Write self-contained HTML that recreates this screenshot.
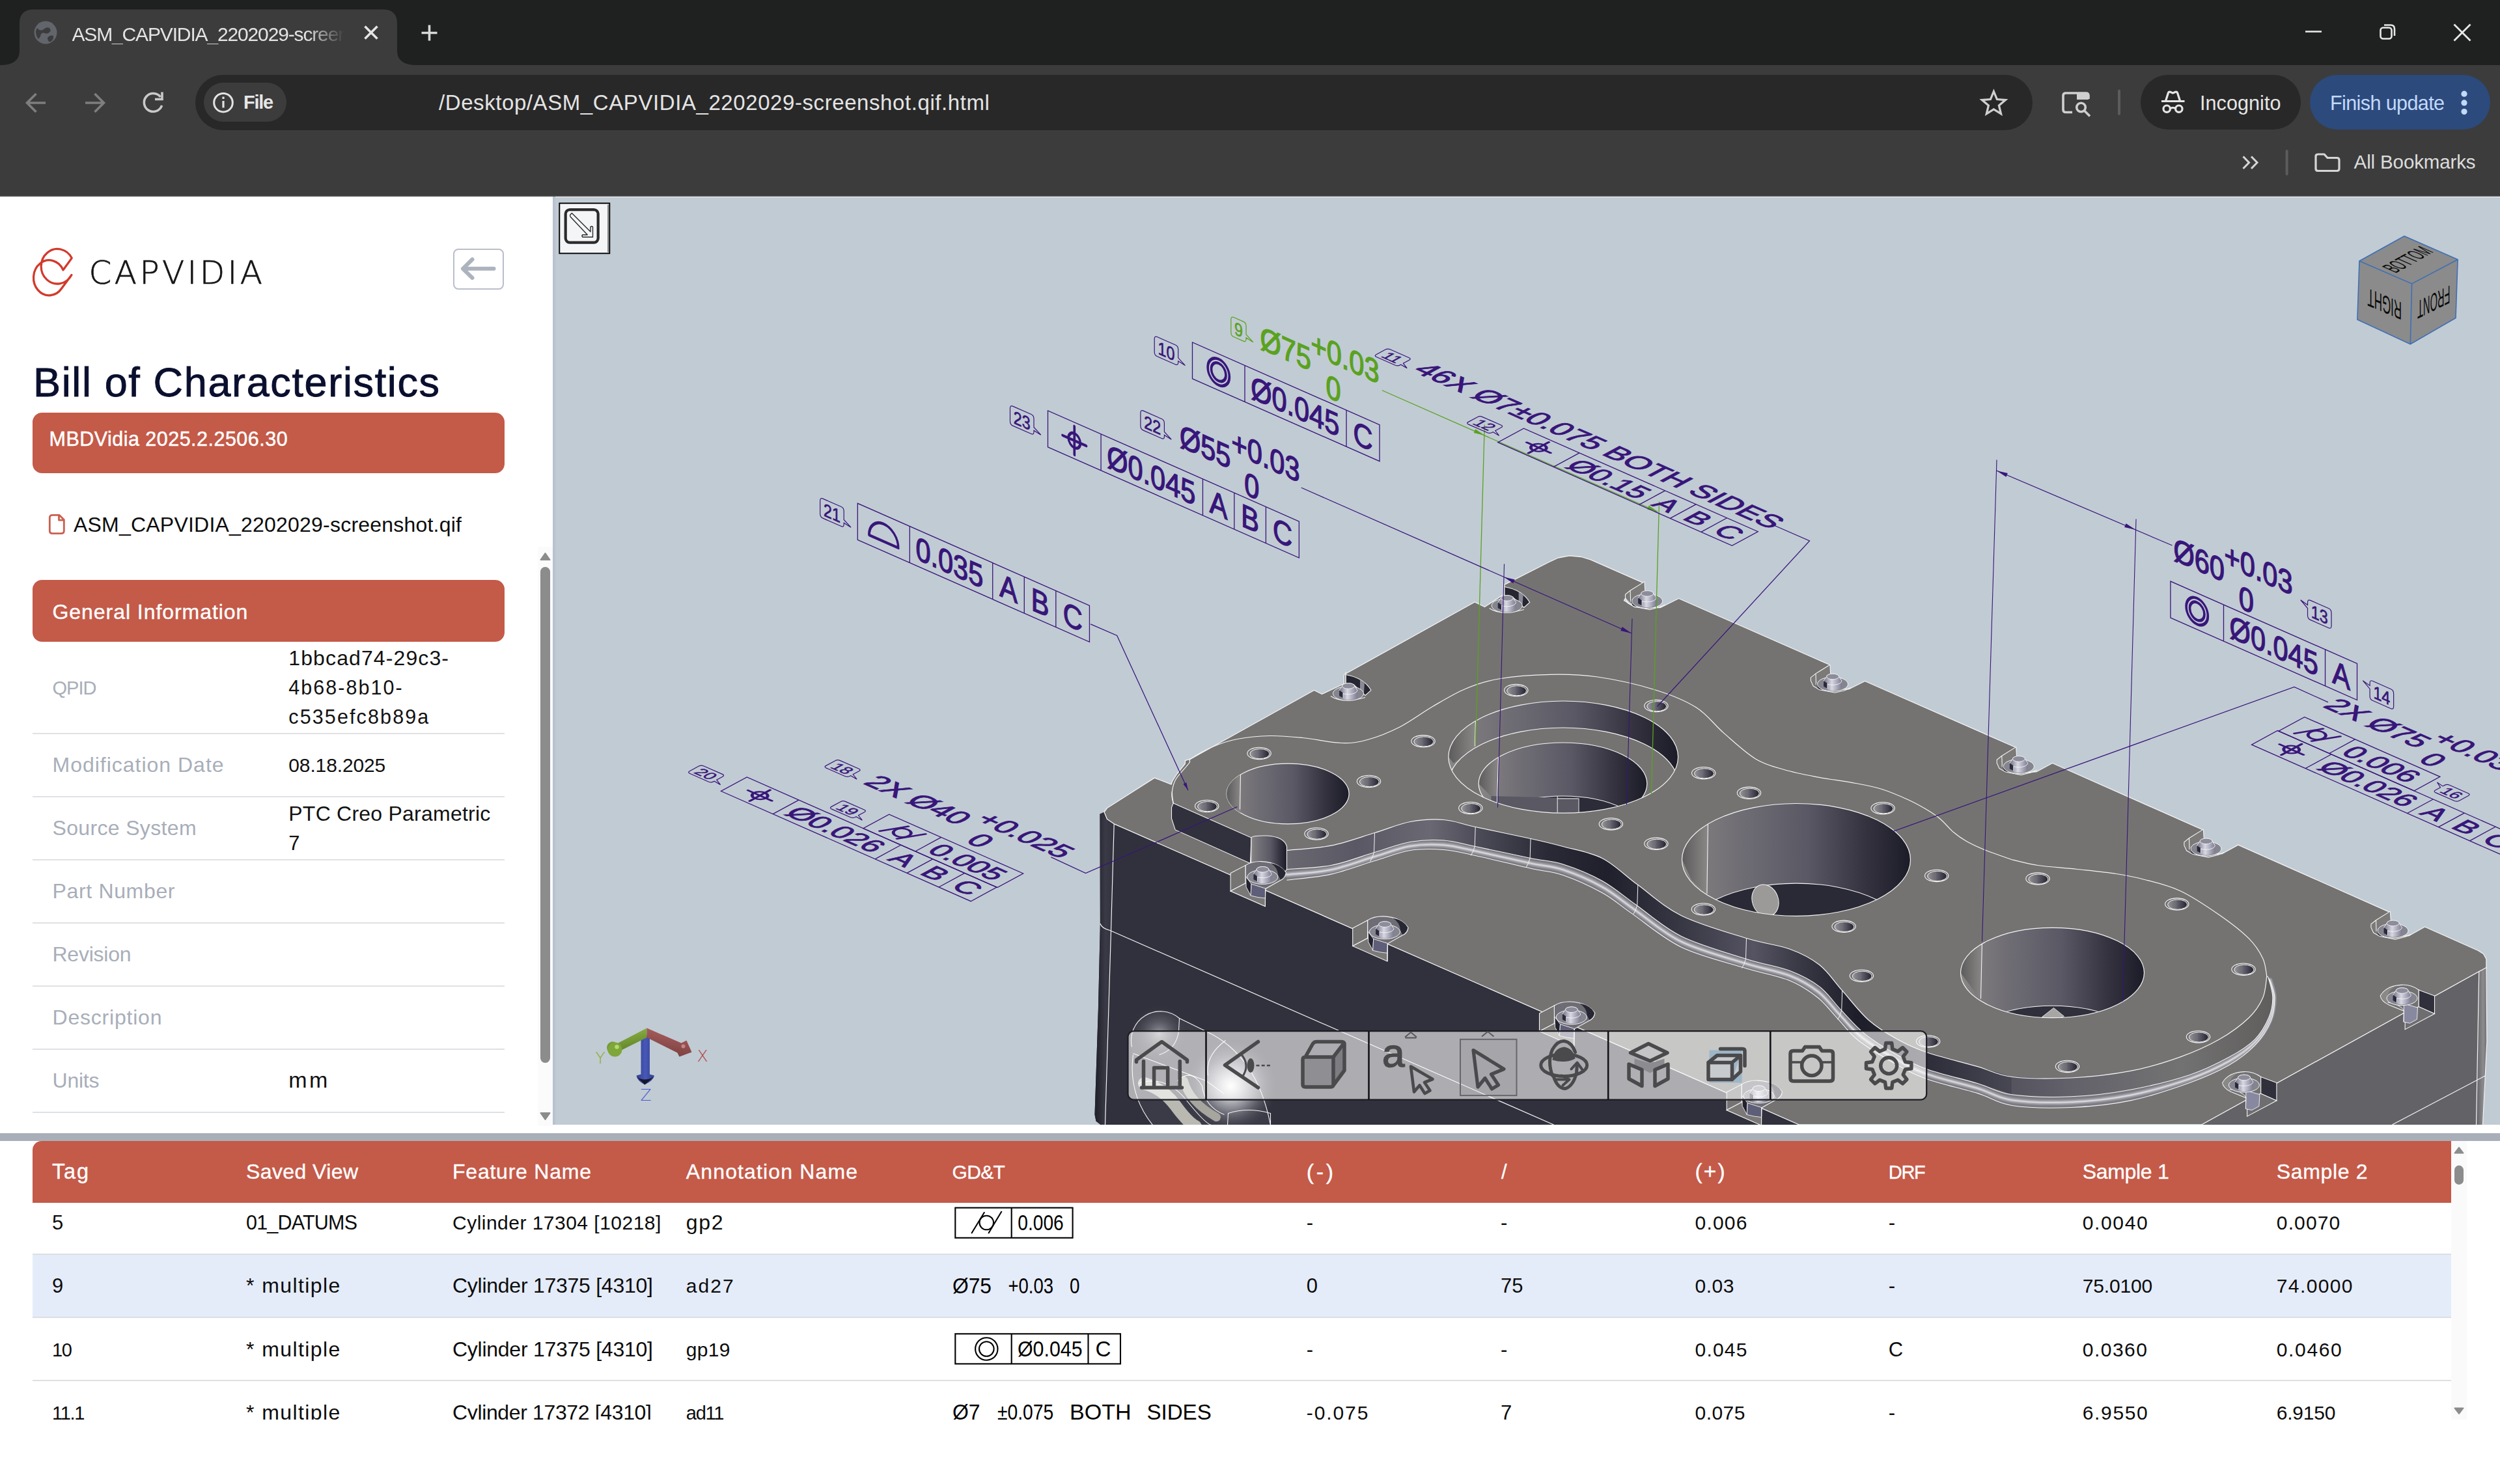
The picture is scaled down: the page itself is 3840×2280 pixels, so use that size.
<!DOCTYPE html>
<html lang="en"><head><meta charset="utf-8"><title>ASM_CAPVIDIA_2202029-screenshot.qif</title>
<style>
html,body{margin:0;padding:0}
body{width:3840px;height:2280px;position:relative;overflow:hidden;background:#fff;font-family:"Liberation Sans",sans-serif}
.t{position:absolute;white-space:nowrap;line-height:1;}
.abs{position:absolute;display:block}
#left{position:absolute;left:0;top:0;width:0;height:0}

#chrome{position:absolute;left:0;top:0;width:3840px;height:302px;background:#3c3c3c}
#tabstrip{position:absolute;left:0;top:0;width:3840px;height:100px;background:#1f2020}
#toolbar{position:absolute;left:0;top:100px;width:3840px;height:200px;background:#3c3c3c;border-bottom:2px solid #4a4a4a;box-sizing:content-box}
#urlbar{position:absolute;left:300px;top:115px;width:2822px;height:84.7px;border-radius:43px;background:#282828}
#filechip{position:absolute;left:313px;top:127.4px;width:127px;height:59.8px;border-radius:30px;background:#3c3c3c}
.pill{position:absolute;top:114.8px;height:84.7px;border-radius:43px}


#left .t, #left .abs, #left div{ }
#backbtn{position:absolute;left:695.6px;top:381.8px;width:78.4px;height:63.6px;border:2.2px solid #b9bec9;border-radius:8px;box-sizing:border-box;background:#fff}
.redbox{position:absolute;left:49.8px;width:725.2px;border-radius:14.5px;background:#c45a48}
.rowline{position:absolute;left:50px;width:725px;height:2.4px;background:#dfe1e5}
#vdiv{position:absolute;left:849px;top:302px;width:3.5px;height:1426px;background:#b9c2ce}

#hdiv{position:absolute;left:0;top:1740.5px;width:3840px;height:12.5px;background:#a9afb9}
#tbl{position:absolute;left:0;top:0;width:0;height:0}
#thead{position:absolute;left:50px;top:1753px;width:3715px;height:94.5px;background:#c45a48;border-radius:14px 0 0 0}
.trow{position:absolute;left:50px;width:3715px;background:#fff}
.trow.hl{background:#e5ecf9}
.tline{position:absolute;left:50px;width:3715px;height:2px;background:#dcdfe4}
#tclip{position:absolute;left:0;top:1848px;width:3765px;height:333px;overflow:hidden}
#tclip .t{margin-top:-1848px}
</style></head>
<body>
<div id="chrome">
<div id="tabstrip"></div>
<svg class="abs" style="left:0;top:0" width="700" height="101" viewBox="0 0 700 101">
<path d="M0 100 Q30 100 30 78 L30 36 Q30 14.5 52 14.5 L588 14.5 Q610 14.5 610 36 L610 78 Q610 100 640 100 L640 101 L0 101 Z" fill="#3c3c3c"/>
<circle cx="70" cy="50" r="17.5" fill="#62656b"/>
<path d="M57 43 q5 6 10 2 q4 -4 9 -2 l2 4 q-4 6 -9 4 q-6 -2 -7 5 l-3 4 q-4 -5 -4 -12z M73 58 q4 -5 9 -3 q1 5 -4 9 q-5 1 -5 -6z" fill="#3c3c3c"/>
<path d="M560.5 40.5 L579.5 59.5 M579.5 40.5 L560.5 59.5" stroke="#e6e6e6" stroke-width="3.6" fill="none"/>
<path d="M647.5 50.5 H671.5 M659.5 38.5 V62.5" stroke="#d8d8d8" stroke-width="3.6" fill="none"/>
</svg>
<span class="t" style="left:110.5px;top:37.6px;font-size:30px;color:#e4e4e4;width:418px;overflow:hidden;white-space:nowrap;-webkit-mask-image:linear-gradient(90deg,#000 86%,transparent 100%);mask-image:linear-gradient(90deg,#000 86%,transparent 100%);letter-spacing:-1.15px;">ASM_CAPVIDIA_2202029-screen</span>
<svg class="abs" style="left:3500px;top:0" width="340" height="100" viewBox="3500 0 340 100">
<path d="M3541 48.5 H3566" stroke="#e8e8e8" stroke-width="2.6"/>
<rect x="3656.5" y="42.5" width="17" height="17" rx="4" fill="none" stroke="#e8e8e8" stroke-width="2.6"/>
<path d="M3662 38.5 H3672 Q3678 38.5 3678 44.5 V55" fill="none" stroke="#e8e8e8" stroke-width="2.6"/>
<path d="M3769.5 37.5 L3794.5 62.5 M3794.5 37.5 L3769.5 62.5" stroke="#e8e8e8" stroke-width="2.8"/>
</svg>
<div id="toolbar"></div>
<div id="urlbar"></div><div id="filechip"></div>
<div class="pill" style="left:3287.5px;width:246.5px;background:#282828"></div>
<div class="pill" style="left:3547.5px;width:277px;background:#2c4a7c"></div>
<svg class="abs" style="left:0;top:100px" width="3840" height="200" viewBox="0 100 3840 200">
<g fill="none" stroke="#7e7e7e" stroke-width="3.6" stroke-linejoin="miter">
<path d="M70 158 H42 M55.5 144 L41.5 158 L55.5 172"/>
<path d="M131 158 H159 M145.5 144 L159.5 158 L145.5 172"/>
</g>
<g fill="none" stroke="#c9c9c9" stroke-width="3.6">
<path d="M246.5 149 A14 14 0 1 0 248.6 162"/>
<path d="M249 141.5 V152.5 H238" />
</g>
<circle cx="343" cy="157.7" r="14.3" fill="none" stroke="#e2e2e2" stroke-width="3"/>
<rect x="341.4" y="155" width="3.2" height="10.5" fill="#e2e2e2"/><rect x="341.4" y="148.6" width="3.2" height="3.4" fill="#e2e2e2"/>
<path d="M3062.4 140.5 L3067.4 152.6 L3080.4 153.6 L3070.4 162 L3073.5 174.8 L3062.4 167.9 L3051.3 174.8 L3054.4 162 L3044.4 153.6 L3057.4 152.6 Z" fill="none" stroke="#d0d0d0" stroke-width="3.2" stroke-linejoin="miter"/>
<g fill="none" stroke="#cfcfcf" stroke-width="3.6">
<path d="M3183 172.5 H3173 Q3169 172.5 3169 168.5 V147 Q3169 143 3173 143 H3204 Q3208 143 3208 147 V152"/>
<circle cx="3196.5" cy="165" r="6.8"/>
<path d="M3201.5 170 L3210 178.5"/>
</g>
<path d="M3190 143 H3204 Q3208 143 3208 147 V153 H3190 Z" fill="#cfcfcf"/>
<rect x="3253" y="137.5" width="4" height="39.5" rx="2" fill="#5c5c5c"/>
<g fill="none" stroke="#e6e6e6" stroke-width="3.2" stroke-linejoin="round">
<path d="M3320 155.5 H3355.5"/>
<path d="M3326.5 155 L3330.5 142.5 Q3331.5 140.5 3333.5 141.3 L3337.5 143 L3341.5 141.3 Q3343.5 140.5 3344.5 142.5 L3348.5 155"/>
<circle cx="3328.2" cy="167.2" r="5.2"/><circle cx="3346.8" cy="167.2" r="5.2"/>
<path d="M3333.4 166.5 Q3337.5 164.5 3341.6 166.5"/>
</g>
<circle cx="3785" cy="144.2" r="4.6" fill="#c3d9fb"/><circle cx="3785" cy="157.9" r="4.6" fill="#c3d9fb"/><circle cx="3785" cy="171.6" r="4.6" fill="#c3d9fb"/>
<path d="M3445.5 240.5 L3454.5 249.8 L3445.5 259 M3458 240.5 L3467 249.8 L3458 259" fill="none" stroke="#d6d6d6" stroke-width="3"/>
<rect x="3510.6" y="230" width="4" height="39.5" rx="2" fill="#5c5c5c"/>
<path d="M3557 240.5 Q3557 237 3560.5 237 H3570 L3575 242.5 H3589.5 Q3593 242.5 3593 246 V259 Q3593 262.5 3589.5 262.5 H3560.5 Q3557 262.5 3557 259 Z" fill="none" stroke="#d6d6d6" stroke-width="3.2" stroke-linejoin="round"/>
</svg>
<span class="t" style="left:374.0px;top:143.1px;font-size:29px;letter-spacing:-1.30px;font-weight:700;color:#e6e6e6;">File</span>
<span class="t" style="left:674.0px;top:141.1px;font-size:33px;letter-spacing:0.58px;color:#e4e4e4;">/Desktop/ASM_CAPVIDIA_2202029-screenshot.qif.html</span>
<span class="t" style="left:3379.0px;top:143.2px;font-size:30.5px;letter-spacing:0.09px;color:#e6e6e6;">Incognito</span>
<span class="t" style="left:3579.0px;top:143.2px;font-size:30.5px;letter-spacing:-0.59px;color:#c3d9fb;">Finish update</span>
<span class="t" style="left:3615.6px;top:234.0px;font-size:29.5px;letter-spacing:-0.13px;color:#dcdcdc;">All Bookmarks</span>
</div>
<div id="left">
<svg class="abs" style="left:40px;top:370px" width="90" height="100" viewBox="40 370 90 100">
<g fill="none" stroke="#d23a2c" stroke-width="3.3" stroke-linecap="round" stroke-linejoin="round">
<path d="M109.9 422.4 A25 26.75 0 1 1 110.2 396.6 L97 414.8 A24 27 0 1 0 94.7 443 Z"/></g></svg>
<span class="t" style="left:136.5px;top:393.9px;font-size:50px;letter-spacing:4.40px;font-family:'DejaVu Sans Light', 'DejaVu Sans', sans-serif;color:#161616;-webkit-text-stroke:0.7px #161616;">CAPVIDIA</span>
<div id="backbtn"></div>
<svg class="abs" style="left:695px;top:381px" width="80" height="65" viewBox="695 381 80 65">
<path d="M758.5 412.8 H711 M725.5 398.5 L711 412.8 L725.5 427" fill="none" stroke="#adb3be" stroke-width="6" stroke-linecap="round" stroke-linejoin="round"/></svg>
<span class="t" style="left:51.0px;top:556.3px;font-size:63px;letter-spacing:1.63px;color:#0a0f2e;-webkit-text-stroke:0.9px #0a0f2e;">Bill of Characteristics</span>
<div class="redbox" style="top:634.2px;height:93px"></div>
<span class="t" style="left:75.5px;top:659.0px;font-size:30.5px;letter-spacing:0.48px;color:#fff;-webkit-text-stroke:0.5px #fff;">MBDVidia 2025.2.2506.30</span>
<svg class="abs" style="left:70px;top:785px" width="36" height="40" viewBox="70 785 36 40">
<path d="M76.3 795.5 Q76.3 791.3 80.5 791.3 H91 L98.3 798.6 V815.5 Q98.3 819.6 94 819.6 H80.5 Q76.3 819.6 76.3 815.5 Z M90.5 791.8 V799.2 H97.8" fill="none" stroke="#c9604f" stroke-width="2.8" stroke-linejoin="round"/></svg>
<span class="t" style="left:113.0px;top:789.9px;font-size:32px;letter-spacing:0.21px;color:#0c0c0c;">ASM_CAPVIDIA_2202029-screenshot.qif</span>
<div class="redbox" style="top:891px;height:94.6px"></div>
<span class="t" style="left:80.5px;top:923.9px;font-size:32px;letter-spacing:0.95px;color:#fff;-webkit-text-stroke:0.4px #fff;">General Information</span>
<div class="rowline" style="top:1125.7px"></div>
<div class="rowline" style="top:1222.8px"></div>
<div class="rowline" style="top:1319.8px"></div>
<div class="rowline" style="top:1416.8px"></div>
<div class="rowline" style="top:1513.8px"></div>
<div class="rowline" style="top:1610.8px"></div>
<div class="rowline" style="top:1707.8px"></div>
<span class="t" style="left:80.5px;top:1042.5px;font-size:29.0px;letter-spacing:-0.97px;color:#a8aeb9;">QPID</span>
<span class="t" style="left:443.3px;top:995.2px;font-size:32px;letter-spacing:1.11px;color:#111;">1bbcad74-29c3-</span>
<span class="t" style="left:443.3px;top:1041.2px;font-size:30.5px;letter-spacing:2.03px;color:#111;">4b68-8b10-</span>
<span class="t" style="left:443.3px;top:1086.2px;font-size:30.5px;letter-spacing:2.12px;color:#111;">c535efc8b89a</span>
<span class="t" style="left:80.5px;top:1158.9px;font-size:32px;letter-spacing:0.99px;color:#a8aeb9;">Modification Date</span>
<span class="t" style="left:443.3px;top:1160.6px;font-size:30px;letter-spacing:-0.13px;color:#111;">08.18.2025</span>
<span class="t" style="left:80.5px;top:1255.9px;font-size:32px;letter-spacing:0.34px;color:#a8aeb9;">Source System</span>
<span class="t" style="left:443.3px;top:1233.9px;font-size:32px;letter-spacing:0.23px;color:#111;">PTC Creo Parametric</span>
<span class="t" style="left:443.3px;top:1279.8px;font-size:31px;color:#111;">7</span>
<span class="t" style="left:80.5px;top:1352.9px;font-size:32px;letter-spacing:0.66px;color:#a8aeb9;">Part Number</span>
<span class="t" style="left:80.5px;top:1449.9px;font-size:32px;letter-spacing:-0.25px;color:#a8aeb9;">Revision</span>
<span class="t" style="left:80.5px;top:1546.9px;font-size:32px;letter-spacing:0.79px;color:#a8aeb9;">Description</span>
<span class="t" style="left:80.5px;top:1643.9px;font-size:32px;letter-spacing:-0.23px;color:#a8aeb9;">Units</span>
<span class="t" style="left:443.3px;top:1642.2px;font-size:34.0px;letter-spacing:3.35px;color:#111;">mm</span>
<svg class="abs" style="left:826px;top:840px" width="24" height="890" viewBox="826 840 24 890">
<rect x="826" y="840" width="24" height="890" fill="#fbfbfb"/>
<path d="M830.5 860 L837.5 850 L844.5 860 Z" fill="#8c8c8c" stroke="#8c8c8c" stroke-width="2" stroke-linejoin="round"/>
<rect x="830" y="871" width="15" height="762" rx="7.5" fill="#8c8c8c"/>
<path d="M830.5 1710 L837.5 1720 L844.5 1710 Z" fill="#8c8c8c" stroke="#8c8c8c" stroke-width="2" stroke-linejoin="round"/>
</svg>
</div>
<div id="vdiv"></div>
<svg id="viewer" class="abs" style="left:852.5px;top:302.5px" width="2987.5" height="1425" viewBox="852.5 302.5 2987.5 1425">
<defs>
<linearGradient id="gHole" x1="0" x2="1" y1="0" y2="0">
<stop offset="0" stop-color="#8a8886"/><stop offset="0.10" stop-color="#7c7a7c"/><stop offset="0.3" stop-color="#6c6a72"/>
<stop offset="0.55" stop-color="#5a5864"/><stop offset="0.8" stop-color="#34333f"/><stop offset="1" stop-color="#1c1c28"/></linearGradient>
<linearGradient id="gHoleL" x1="0" x2="1" y1="0" y2="0">
<stop offset="0" stop-color="#5c5b5b"/><stop offset="1" stop-color="#8a8887"/></linearGradient>
<linearGradient id="gSmall" x1="0" x2="1" y1="0" y2="0">
<stop offset="0" stop-color="#9a98a0"/><stop offset="0.45" stop-color="#66647080"/><stop offset="0.45" stop-color="#666470"/><stop offset="1" stop-color="#22222e"/></linearGradient>
<linearGradient id="gWall" gradientUnits="userSpaceOnUse" x1="1970" x2="3100" y1="0" y2="0">
<stop offset="0" stop-color="#6a6870"/><stop offset="0.10" stop-color="#5a5864"/><stop offset="0.2" stop-color="#6a6872"/><stop offset="0.27" stop-color="#4a4956"/>
<stop offset="0.36" stop-color="#2a2a36"/><stop offset="0.44" stop-color="#20202c"/><stop offset="0.55" stop-color="#3a3946"/><stop offset="0.64" stop-color="#565462"/><stop offset="0.70" stop-color="#3a3946"/>
<stop offset="0.78" stop-color="#1e1e2a"/><stop offset="0.86" stop-color="#2a2a36"/><stop offset="1" stop-color="#4a4956"/></linearGradient>
<linearGradient id="gWall2" gradientUnits="userSpaceOnUse" x1="3000" x2="3500" y1="0" y2="0">
<stop offset="0" stop-color="#464552"/><stop offset="0.35" stop-color="#62616a"/><stop offset="0.7" stop-color="#737272"/><stop offset="1" stop-color="#5e5d5c"/></linearGradient>
<linearGradient id="gEdgeL" gradientUnits="userSpaceOnUse" x1="1684" x2="1710" y1="0" y2="0">
<stop offset="0" stop-color="#23232d"/><stop offset="0.5" stop-color="#3a3a46"/><stop offset="1" stop-color="#32323e"/></linearGradient>
<linearGradient id="gEdgeR" gradientUnits="userSpaceOnUse" x1="3804" x2="3820" y1="0" y2="0">
<stop offset="0" stop-color="#666569"/><stop offset="0.6" stop-color="#8c8b8e"/><stop offset="1" stop-color="#6e6d70"/></linearGradient>
<linearGradient id="gBolt" x1="0" x2="1" y1="0" y2="0">
<stop offset="0" stop-color="#6e6e82"/><stop offset="0.45" stop-color="#d8d8e4"/><stop offset="1" stop-color="#7c7c92"/></linearGradient>
<linearGradient id="gNut" x1="0" x2="1" y1="0" y2="0">
<stop offset="0" stop-color="#4a4a5c"/><stop offset="0.4" stop-color="#9a9ab0"/><stop offset="1" stop-color="#8686a0"/></linearGradient>
<radialGradient id="gBoss" cx="0.5" cy="0.5" r="0.5">
<stop offset="0" stop-color="#ffffff"/><stop offset="0.25" stop-color="#c8c8cc"/><stop offset="0.7" stop-color="#6a6a76"/><stop offset="1" stop-color="#34343f"/></radialGradient>
<linearGradient id="gFillet" x1="0" x2="0" y1="0" y2="1">
<stop offset="0" stop-color="#55545e"/><stop offset="0.5" stop-color="#c4c4c8"/><stop offset="1" stop-color="#8a8988"/></linearGradient>
</defs>
<rect x="852" y="302" width="2990" height="1427" fill="#c1cbd4"/>
<g id="model">
<path d="M1689.0 1250.0 L1695.5 1247.0 L1700.0 1258.0 L1710.7 1265.3 L2763.0 1727.5 L1690.0 1727.5 L1683.0 1722.0 L1681.0 1712.0 L1686.4 1550.0 L1689.4 1418.5 Z" fill="#31313d"/>
<path d="M1689 1250 L1710.7 1265.3 L1706 1430 L1697 1727.5 L1690 1727.5 L1683 1722 L1681 1712 L1686.4 1550 L1689.4 1418.5 Z" fill="url(#gEdgeL)"/>
<defs><radialGradient id="gB1" cx="0.5" cy="0.5" r="0.5"><stop offset="0" stop-color="#fff"/><stop offset="0.18" stop-color="#d8d8dc"/><stop offset="0.5" stop-color="#85858f"/><stop offset="1" stop-color="#3a3a46" stop-opacity="0"/></radialGradient><radialGradient id="gB2" cx="0.5" cy="0.5" r="0.5"><stop offset="0" stop-color="#9a9aa2"/><stop offset="1" stop-color="#3a3a46" stop-opacity="0"/></radialGradient><clipPath id="cpBoss"><rect x="1690" y="1540" width="320" height="187.5"/></clipPath></defs>
<g clip-path="url(#cpBoss)">
<path d="M1738 1608 A45 45 0 0 1 1811 1564 L1852 1584 Q1930 1620 1951 1728 L1770 1728 Q1732 1680 1738 1608 Z" fill="#3b3b47"/>
<circle cx="1780" cy="1588" r="44" fill="url(#gB2)"/>
<circle cx="1890" cy="1668" r="72" fill="url(#gB1)"/>
<path d="M1757 1664 Q1786 1672 1805 1698 T1836 1730" fill="none" stroke="#b9b9b2" stroke-width="19" stroke-linecap="round"/>
<path d="M1818 1660 Q1826 1692 1868 1716" fill="none" stroke="#a6a69f" stroke-width="13" stroke-linecap="round"/>
<path d="M1738 1608 A45 45 0 0 1 1811 1564 L1810 1584 Q1806 1612 1780 1620 M1740 1620 Q1732 1680 1770 1728 M1852 1584 Q1930 1620 1951 1728 M1882 1598 Q1850 1622 1855 1652 M1885 1728 L1886 1710 Q1916 1700 1951 1710 L1951 1728 M1740 1618 L1852 1660 L1880 1680 M1811 1564 L1852 1584 M1748 1664 Q1790 1650 1822 1690 T1862 1728 M1808 1660 Q1830 1640 1846 1668 Q1850 1700 1880 1712" fill="none" stroke="#f4f4f4" stroke-width="1.1"/>
</g>
<path d="M1710.7 1265.3 L1706 1430 L1697 1727.5 M1704.6 1429 L2386 1727.5 M1689.4 1418.5 Q1692 1426 1704.6 1429" fill="none" stroke="#f4f4f4" stroke-width="1.2"/>
<path d="M3818.5 1486.0 L3381.0 1727.5 L3813.0 1727.5 L3819.4 1600.0 Z" fill="#636266"/>
<path d="M3807 1490 L3818.5 1486 L3819.4 1600 L3813 1727.5 L3803 1727.5 Z" fill="url(#gEdgeR)"/>
<path d="M3816.4 1652.5 L3673.9 1727.5 M3807.3 1490 L3803 1727.5 M3818.5 1486 L3819.4 1600 L3813 1727.5" fill="none" stroke="#f4f4f4" stroke-width="1.2"/>
<path d="M1695.5 1247.0 L1700.0 1241.0 L1772.8 1194.6 L1798.6 1204.6 L1800.1 1200.0 L1807.7 1188.0 L1819.9 1172.8 L1819.9 1168.2 L1829.0 1165.2 L2018.0 1060.0 L2030.0 1066.0 L2064.0 1050.0 L2064.0 1036.0 L2264.7 924.5 L2280.0 932.0 L2310.2 912.0 L2310.2 897.8 L2378.0 863.5 L2393.0 856.5 L2410.3 853.4 L2428.0 855.0 L2442.6 859.4 L2525.5 895.8 L2525.5 903.0 L2500.0 912.0 L2494.0 922.0 L2510.0 932.0 L2550.0 933.0 L2578.0 919.0 L2810.0 1021.0 L2810.0 1034.0 L2792.0 1042.0 L2790.0 1050.0 L2810.0 1060.0 L2840.0 1058.0 L2864.0 1046.0 L3096.0 1148.0 L3096.0 1161.0 L3078.0 1169.0 L3076.0 1178.0 L3096.0 1188.0 L3128.0 1185.0 L3152.0 1172.0 L3382.0 1274.0 L3382.0 1287.0 L3364.0 1295.0 L3362.0 1304.0 L3382.0 1314.0 L3413.0 1311.0 L3437.3 1297.6 L3669.3 1400.7 L3669.3 1413.0 L3651.0 1421.0 L3649.0 1430.0 L3669.0 1440.0 L3700.0 1437.0 L3724.0 1423.5 L3806.0 1460.0 L3814.0 1465.0 L3818.5 1473.0 L3818.5 1486.0 L3381.0 1727.5 L2763.0 1727.5 L1710.7 1265.3 L1700.0 1258.0 Z" fill="#747372" stroke="#f4f4f4" stroke-width="1.3" stroke-linejoin="round"/>
<path d="M1801.7 1233.5 C1801.4 1230.4 1799.3 1221.2 1800.0 1215.0 C1800.7 1208.8 1801.7 1203.2 1806.0 1196.0 C1810.3 1188.8 1822.2 1177.2 1826.0 1172.0 C1829.8 1166.8 1823.0 1169.2 1829.0 1165.0 C1835.0 1160.8 1850.2 1152.0 1862.0 1147.0 C1873.8 1142.0 1885.3 1137.8 1900.0 1135.0 C1914.7 1132.2 1933.3 1130.3 1950.0 1130.0 C1966.7 1129.7 1981.7 1131.2 2000.0 1133.0 C2018.3 1134.8 2043.3 1140.5 2060.0 1141.0 C2076.7 1141.5 2085.0 1140.1 2100.0 1136.0 C2115.0 1131.9 2133.3 1124.7 2150.0 1116.2 C2166.7 1107.7 2183.3 1094.7 2200.0 1085.0 C2216.7 1075.3 2233.1 1065.1 2250.0 1058.0 C2266.9 1050.9 2279.9 1046.2 2301.7 1042.5 C2323.4 1038.8 2355.2 1036.3 2380.5 1035.8 C2405.8 1035.3 2426.5 1035.6 2453.3 1039.5 C2480.1 1043.4 2516.0 1051.4 2541.3 1059.2 C2566.6 1067.0 2587.3 1075.4 2605.0 1086.5 C2622.7 1097.6 2632.2 1112.8 2647.4 1125.9 C2662.6 1139.1 2680.6 1156.1 2696.0 1165.4 C2711.4 1174.8 2724.8 1177.5 2740.0 1182.0 C2755.2 1186.5 2768.7 1189.1 2787.0 1192.6 C2805.3 1196.1 2832.8 1199.8 2850.0 1203.0 C2867.2 1206.2 2876.7 1207.8 2890.0 1212.0 C2903.3 1216.2 2918.3 1222.7 2930.0 1228.0 C2941.7 1233.3 2951.7 1239.0 2960.0 1244.0 C2968.3 1249.0 2973.3 1252.3 2980.0 1258.0 C2986.7 1263.7 2993.3 1272.3 3000.0 1278.0 C3006.7 1283.7 3011.7 1287.3 3020.0 1292.0 C3028.3 1296.7 3038.3 1301.3 3050.0 1306.0 C3061.7 1310.7 3083.3 1317.9 3090.0 1320.3" fill="none" stroke="#f4f4f4" stroke-width="1.2"/>
<path d="M1976.0 1335.0 C1987.3 1334.0 2021.5 1333.3 2044.0 1329.0 C2066.5 1324.7 2090.7 1315.0 2111.0 1309.0 C2131.3 1303.0 2147.9 1296.1 2165.6 1293.0 C2183.3 1289.9 2200.3 1289.3 2217.0 1290.5 C2233.7 1291.7 2243.4 1295.4 2265.7 1300.0 C2288.0 1304.6 2328.2 1313.5 2350.6 1318.0 C2373.0 1322.5 2381.7 1321.5 2400.0 1327.3 C2418.3 1333.1 2442.0 1342.6 2460.7 1353.0 C2479.4 1363.4 2492.0 1375.3 2512.2 1389.5 C2532.4 1403.7 2553.7 1424.1 2582.0 1438.0 C2610.3 1451.9 2654.2 1464.1 2682.0 1472.9 C2709.8 1481.7 2730.1 1483.9 2748.8 1491.0 C2767.5 1498.1 2781.2 1505.3 2794.3 1515.4 C2807.5 1525.5 2816.1 1539.6 2827.7 1551.7 C2839.3 1563.8 2849.3 1576.5 2864.0 1588.1 C2878.7 1599.7 2899.4 1612.4 2915.6 1621.5 C2931.8 1630.6 2940.8 1635.6 2961.0 1642.7 C2981.2 1649.8 3015.5 1657.6 3037.0 1664.0 C3058.5 1670.4 3066.0 1677.9 3090.0 1681.3 C3114.0 1684.7 3150.7 1685.6 3181.0 1684.3 C3211.3 1683.0 3241.7 1679.3 3272.0 1673.7 C3302.3 1668.1 3337.7 1659.2 3363.0 1650.9 C3388.3 1642.6 3406.9 1632.7 3423.6 1623.6 C3440.3 1614.5 3452.9 1606.4 3463.0 1596.3 C3473.1 1586.2 3479.7 1573.6 3484.3 1563.0 C3488.9 1552.4 3490.4 1542.5 3490.4 1532.6 C3490.4 1522.7 3485.8 1509.3 3484.3 1503.8 C3482.8 1498.2 3481.8 1500.0 3481.3 1499.3 L3481.3 1499.3 C3482.2 1500.8 3485.0 1502.5 3487.0 1508.0 C3489.0 1513.5 3493.3 1522.4 3493.4 1532.6 C3493.5 1542.8 3492.4 1556.9 3487.3 1569.0 C3482.2 1581.1 3473.6 1594.3 3463.0 1605.4 C3452.4 1616.5 3440.3 1626.2 3423.6 1635.8 C3406.9 1645.4 3388.3 1653.9 3363.0 1663.0 C3337.7 1672.1 3302.3 1684.1 3272.0 1690.4 C3241.7 1696.7 3211.3 1699.7 3181.0 1701.0 C3150.7 1702.3 3114.0 1701.7 3090.0 1698.0 C3066.0 1694.3 3058.5 1685.8 3037.0 1679.1 C3015.5 1672.4 2981.2 1665.0 2961.0 1657.9 C2940.8 1650.8 2933.3 1646.6 2915.6 1636.7 C2897.9 1626.8 2870.7 1610.9 2855.0 1598.8 C2839.3 1586.7 2832.2 1575.0 2821.6 1563.9 C2811.0 1552.8 2803.4 1541.6 2791.3 1532.0 C2779.2 1522.4 2767.5 1513.8 2748.8 1506.2 C2730.1 1498.6 2706.8 1495.1 2679.0 1486.5 C2651.2 1477.9 2610.8 1468.6 2582.0 1454.7 C2553.2 1440.8 2526.4 1417.0 2506.2 1403.1 C2486.0 1389.2 2478.4 1381.1 2460.7 1371.3 C2443.0 1361.5 2418.3 1350.3 2400.0 1344.0 C2381.7 1337.7 2373.0 1338.7 2350.6 1333.7 C2328.2 1328.7 2288.0 1318.8 2265.7 1314.0 C2243.4 1309.2 2233.7 1306.3 2217.0 1305.0 C2200.3 1303.7 2183.3 1303.2 2165.6 1306.0 C2147.9 1308.8 2131.3 1315.9 2111.0 1322.0 C2090.7 1328.1 2066.5 1337.6 2044.0 1342.6 C2021.5 1347.5 1987.3 1350.2 1976.0 1351.7 Z" fill="#7c7b82"/>
<path d="M1976.0 1343.3 C1987.3 1342.1 2021.5 1340.4 2044.0 1335.8 C2066.5 1331.2 2090.7 1321.5 2111.0 1315.5 C2131.3 1309.5 2147.9 1302.5 2165.6 1299.5 C2183.3 1296.5 2200.3 1296.5 2217.0 1297.8 C2233.7 1299.0 2243.4 1302.3 2265.7 1307.0 C2288.0 1311.7 2328.2 1321.1 2350.6 1325.8 C2373.0 1330.6 2381.7 1329.6 2400.0 1335.7 C2418.3 1341.7 2442.5 1352.0 2460.7 1362.2 C2478.9 1372.3 2489.0 1382.3 2509.2 1396.3 C2529.4 1410.3 2553.4 1432.4 2582.0 1446.3 C2610.6 1460.2 2652.7 1471.0 2680.5 1479.7 C2708.3 1488.4 2730.1 1491.3 2748.8 1498.6 C2767.5 1505.9 2780.2 1513.8 2792.8 1523.7 C2805.4 1533.6 2813.5 1546.2 2824.6 1557.8 C2835.8 1569.4 2844.3 1581.6 2859.5 1593.4 C2874.7 1605.3 2898.7 1619.6 2915.6 1629.1 C2932.5 1638.6 2940.8 1643.2 2961.0 1650.3 C2981.2 1657.4 3015.5 1665.0 3037.0 1671.5 C3058.5 1678.1 3066.0 1686.1 3090.0 1689.7 C3114.0 1693.2 3150.7 1693.9 3181.0 1692.7 C3211.3 1691.4 3241.7 1688.0 3272.0 1682.1 C3302.3 1676.1 3337.7 1665.7 3363.0 1657.0 C3388.3 1648.2 3406.9 1639.0 3423.6 1629.7 C3440.3 1620.3 3452.6 1611.5 3463.0 1600.8 C3473.4 1590.2 3481.0 1577.4 3485.8 1566.0 C3490.6 1554.6 3491.9 1542.6 3491.9 1532.6 C3491.9 1522.6 3486.7 1510.4 3485.7 1505.9" fill="none" stroke="#8f8e96" stroke-width="9" stroke-linecap="round"/>
<path d="M1976.0 1343.3 C1987.3 1342.1 2021.5 1340.4 2044.0 1335.8 C2066.5 1331.2 2090.7 1321.5 2111.0 1315.5 C2131.3 1309.5 2147.9 1302.5 2165.6 1299.5 C2183.3 1296.5 2200.3 1296.5 2217.0 1297.8 C2233.7 1299.0 2243.4 1302.3 2265.7 1307.0 C2288.0 1311.7 2328.2 1321.1 2350.6 1325.8 C2373.0 1330.6 2381.7 1329.6 2400.0 1335.7 C2418.3 1341.7 2442.5 1352.0 2460.7 1362.2 C2478.9 1372.3 2489.0 1382.3 2509.2 1396.3 C2529.4 1410.3 2553.4 1432.4 2582.0 1446.3 C2610.6 1460.2 2652.7 1471.0 2680.5 1479.7 C2708.3 1488.4 2730.1 1491.3 2748.8 1498.6 C2767.5 1505.9 2780.2 1513.8 2792.8 1523.7 C2805.4 1533.6 2813.5 1546.2 2824.6 1557.8 C2835.8 1569.4 2844.3 1581.6 2859.5 1593.4 C2874.7 1605.3 2898.7 1619.6 2915.6 1629.1 C2932.5 1638.6 2940.8 1643.2 2961.0 1650.3 C2981.2 1657.4 3015.5 1665.0 3037.0 1671.5 C3058.5 1678.1 3066.0 1686.1 3090.0 1689.7 C3114.0 1693.2 3150.7 1693.9 3181.0 1692.7 C3211.3 1691.4 3241.7 1688.0 3272.0 1682.1 C3302.3 1676.1 3337.7 1665.7 3363.0 1657.0 C3388.3 1648.2 3406.9 1639.0 3423.6 1629.7 C3440.3 1620.3 3452.6 1611.5 3463.0 1600.8 C3473.4 1590.2 3481.0 1577.4 3485.8 1566.0 C3490.6 1554.6 3491.9 1542.6 3491.9 1532.6 C3491.9 1522.6 3486.7 1510.4 3485.7 1505.9" fill="none" stroke="#a3a3aa" stroke-width="6" stroke-linecap="round"/>
<path d="M1976.0 1343.3 C1987.3 1342.1 2021.5 1340.4 2044.0 1335.8 C2066.5 1331.2 2090.7 1321.5 2111.0 1315.5 C2131.3 1309.5 2147.9 1302.5 2165.6 1299.5 C2183.3 1296.5 2200.3 1296.5 2217.0 1297.8 C2233.7 1299.0 2243.4 1302.3 2265.7 1307.0 C2288.0 1311.7 2328.2 1321.1 2350.6 1325.8 C2373.0 1330.6 2381.7 1329.6 2400.0 1335.7 C2418.3 1341.7 2442.5 1352.0 2460.7 1362.2 C2478.9 1372.3 2489.0 1382.3 2509.2 1396.3 C2529.4 1410.3 2553.4 1432.4 2582.0 1446.3 C2610.6 1460.2 2652.7 1471.0 2680.5 1479.7 C2708.3 1488.4 2730.1 1491.3 2748.8 1498.6 C2767.5 1505.9 2780.2 1513.8 2792.8 1523.7 C2805.4 1533.6 2813.5 1546.2 2824.6 1557.8 C2835.8 1569.4 2844.3 1581.6 2859.5 1593.4 C2874.7 1605.3 2898.7 1619.6 2915.6 1629.1 C2932.5 1638.6 2940.8 1643.2 2961.0 1650.3 C2981.2 1657.4 3015.5 1665.0 3037.0 1671.5 C3058.5 1678.1 3066.0 1686.1 3090.0 1689.7 C3114.0 1693.2 3150.7 1693.9 3181.0 1692.7 C3211.3 1691.4 3241.7 1688.0 3272.0 1682.1 C3302.3 1676.1 3337.7 1665.7 3363.0 1657.0 C3388.3 1648.2 3406.9 1639.0 3423.6 1629.7 C3440.3 1620.3 3452.6 1611.5 3463.0 1600.8 C3473.4 1590.2 3481.0 1577.4 3485.8 1566.0 C3490.6 1554.6 3491.9 1542.6 3491.9 1532.6 C3491.9 1522.6 3486.7 1510.4 3485.7 1505.9" fill="none" stroke="#bcbcc2" stroke-width="3.4" stroke-linecap="round"/>
<path d="M1976.0 1343.3 C1987.3 1342.1 2021.5 1340.4 2044.0 1335.8 C2066.5 1331.2 2090.7 1321.5 2111.0 1315.5 C2131.3 1309.5 2147.9 1302.5 2165.6 1299.5 C2183.3 1296.5 2200.3 1296.5 2217.0 1297.8 C2233.7 1299.0 2243.4 1302.3 2265.7 1307.0 C2288.0 1311.7 2328.2 1321.1 2350.6 1325.8 C2373.0 1330.6 2381.7 1329.6 2400.0 1335.7 C2418.3 1341.7 2442.5 1352.0 2460.7 1362.2 C2478.9 1372.3 2489.0 1382.3 2509.2 1396.3 C2529.4 1410.3 2553.4 1432.4 2582.0 1446.3 C2610.6 1460.2 2652.7 1471.0 2680.5 1479.7 C2708.3 1488.4 2730.1 1491.3 2748.8 1498.6 C2767.5 1505.9 2780.2 1513.8 2792.8 1523.7 C2805.4 1533.6 2813.5 1546.2 2824.6 1557.8 C2835.8 1569.4 2844.3 1581.6 2859.5 1593.4 C2874.7 1605.3 2898.7 1619.6 2915.6 1629.1 C2932.5 1638.6 2940.8 1643.2 2961.0 1650.3 C2981.2 1657.4 3015.5 1665.0 3037.0 1671.5 C3058.5 1678.1 3066.0 1686.1 3090.0 1689.7 C3114.0 1693.2 3150.7 1693.9 3181.0 1692.7 C3211.3 1691.4 3241.7 1688.0 3272.0 1682.1 C3302.3 1676.1 3337.7 1665.7 3363.0 1657.0 C3388.3 1648.2 3406.9 1639.0 3423.6 1629.7 C3440.3 1620.3 3452.6 1611.5 3463.0 1600.8 C3473.4 1590.2 3481.0 1577.4 3485.8 1566.0 C3490.6 1554.6 3491.9 1542.6 3491.9 1532.6 C3491.9 1522.6 3486.7 1510.4 3485.7 1505.9" fill="none" stroke="#dadade" stroke-width="1.6" stroke-linecap="round"/>
<path d="M1976.0 1351.7 C1987.3 1350.2 2021.5 1347.5 2044.0 1342.6 C2066.5 1337.6 2090.7 1328.1 2111.0 1322.0 C2131.3 1315.9 2147.9 1308.8 2165.6 1306.0 C2183.3 1303.2 2200.3 1303.7 2217.0 1305.0 C2233.7 1306.3 2243.4 1309.2 2265.7 1314.0 C2288.0 1318.8 2328.2 1328.7 2350.6 1333.7 C2373.0 1338.7 2381.7 1337.7 2400.0 1344.0 C2418.3 1350.3 2443.0 1361.5 2460.7 1371.3 C2478.4 1381.1 2486.0 1389.2 2506.2 1403.1 C2526.4 1417.0 2553.2 1440.8 2582.0 1454.7 C2610.8 1468.6 2651.2 1477.9 2679.0 1486.5 C2706.8 1495.1 2730.1 1498.6 2748.8 1506.2 C2767.5 1513.8 2779.2 1522.4 2791.3 1532.0 C2803.4 1541.6 2811.0 1552.8 2821.6 1563.9 C2832.2 1575.0 2839.3 1586.7 2855.0 1598.8 C2870.7 1610.9 2897.9 1626.8 2915.6 1636.7 C2933.3 1646.6 2940.8 1650.8 2961.0 1657.9 C2981.2 1665.0 3015.5 1672.4 3037.0 1679.1 C3058.5 1685.8 3066.0 1694.3 3090.0 1698.0 C3114.0 1701.7 3150.7 1702.3 3181.0 1701.0 C3211.3 1699.7 3241.7 1696.7 3272.0 1690.4 C3302.3 1684.1 3337.7 1672.1 3363.0 1663.0 C3388.3 1653.9 3406.9 1645.4 3423.6 1635.8 C3440.3 1626.2 3452.4 1616.5 3463.0 1605.4 C3473.6 1594.3 3482.2 1581.1 3487.3 1569.0 C3492.4 1556.9 3493.5 1542.8 3493.4 1532.6 C3493.3 1522.4 3489.0 1513.5 3487.0 1508.0 C3485.0 1502.5 3482.2 1500.8 3481.3 1499.3" fill="none" stroke="#f4f4f4" stroke-width="1.1"/>
<path d="M1976.0 1306.0 C1987.3 1304.8 2021.5 1303.2 2044.0 1298.7 C2066.5 1294.2 2090.7 1285.1 2111.0 1279.0 C2131.3 1272.9 2147.9 1265.3 2165.6 1262.0 C2183.3 1258.7 2200.3 1257.7 2217.0 1259.0 C2233.7 1260.3 2243.4 1265.2 2265.7 1270.0 C2288.0 1274.8 2328.2 1283.0 2350.6 1288.0 C2373.0 1293.0 2381.7 1295.0 2400.0 1300.0 C2418.3 1305.0 2441.5 1308.4 2460.7 1318.2 C2479.9 1328.0 2495.1 1344.4 2515.3 1359.1 C2535.5 1373.8 2554.2 1392.5 2582.0 1406.2 C2609.8 1419.9 2654.2 1432.4 2682.0 1441.0 C2709.8 1449.6 2730.1 1450.9 2748.8 1457.7 C2767.5 1464.5 2780.9 1471.4 2794.3 1482.0 C2807.7 1492.6 2816.6 1507.2 2829.2 1521.4 C2841.8 1535.6 2855.6 1554.4 2870.0 1567.0 C2884.4 1579.6 2900.4 1588.9 2915.6 1597.2 C2930.8 1605.5 2940.8 1610.2 2961.0 1617.0 C2981.2 1623.8 3015.5 1632.0 3037.0 1638.2 C3058.5 1644.4 3081.2 1651.4 3090.0 1654.0 L3090.0 1681.3 C3081.2 1678.4 3058.5 1670.4 3037.0 1664.0 C3015.5 1657.6 2981.2 1649.8 2961.0 1642.7 C2940.8 1635.6 2931.8 1630.6 2915.6 1621.5 C2899.4 1612.4 2878.7 1599.7 2864.0 1588.1 C2849.3 1576.5 2839.3 1563.8 2827.7 1551.7 C2816.1 1539.6 2807.5 1525.5 2794.3 1515.4 C2781.2 1505.3 2767.5 1498.1 2748.8 1491.0 C2730.1 1483.9 2709.8 1481.7 2682.0 1472.9 C2654.2 1464.1 2610.3 1451.9 2582.0 1438.0 C2553.7 1424.1 2532.4 1403.7 2512.2 1389.5 C2492.0 1375.3 2479.4 1363.4 2460.7 1353.0 C2442.0 1342.6 2418.3 1333.1 2400.0 1327.3 C2381.7 1321.5 2373.0 1322.5 2350.6 1318.0 C2328.2 1313.5 2288.0 1304.6 2265.7 1300.0 C2243.4 1295.4 2233.7 1291.7 2217.0 1290.5 C2200.3 1289.3 2183.3 1289.9 2165.6 1293.0 C2147.9 1296.1 2131.3 1303.0 2111.0 1309.0 C2090.7 1315.0 2066.5 1324.7 2044.0 1329.0 C2021.5 1333.3 1987.3 1334.0 1976.0 1335.0 Z" fill="url(#gWall)"/>
<path d="M3090.0 1654.0 C3105.2 1654.2 3150.7 1657.0 3181.0 1655.5 C3211.3 1654.0 3244.2 1650.2 3272.0 1644.9 C3299.8 1639.6 3325.1 1631.7 3347.8 1623.6 C3370.6 1615.5 3390.8 1606.4 3408.5 1596.3 C3426.2 1586.2 3442.9 1573.6 3454.0 1563.0 C3465.1 1552.4 3470.6 1543.2 3475.2 1532.6 C3479.8 1522.0 3480.3 1504.8 3481.3 1499.3 L3481.3 1499.3 C3481.8 1500.0 3482.8 1498.2 3484.3 1503.8 C3485.8 1509.3 3490.4 1522.7 3490.4 1532.6 C3490.4 1542.5 3488.9 1552.4 3484.3 1563.0 C3479.7 1573.6 3473.1 1586.2 3463.0 1596.3 C3452.9 1606.4 3440.3 1614.5 3423.6 1623.6 C3406.9 1632.7 3388.3 1642.6 3363.0 1650.9 C3337.7 1659.2 3302.3 1668.1 3272.0 1673.7 C3241.7 1679.3 3211.3 1683.0 3181.0 1684.3 C3150.7 1685.6 3105.2 1681.8 3090.0 1681.3 Z" fill="url(#gWall2)"/>
<path d="M1976.0 1306.0 C1987.3 1304.8 2021.5 1303.2 2044.0 1298.7 C2066.5 1294.2 2090.7 1285.1 2111.0 1279.0 C2131.3 1272.9 2147.9 1265.3 2165.6 1262.0 C2183.3 1258.7 2200.3 1257.7 2217.0 1259.0 C2233.7 1260.3 2243.4 1265.2 2265.7 1270.0 C2288.0 1274.8 2328.2 1283.0 2350.6 1288.0 C2373.0 1293.0 2381.7 1295.0 2400.0 1300.0 C2418.3 1305.0 2441.5 1308.4 2460.7 1318.2 C2479.9 1328.0 2495.1 1344.4 2515.3 1359.1 C2535.5 1373.8 2554.2 1392.5 2582.0 1406.2 C2609.8 1419.9 2654.2 1432.4 2682.0 1441.0 C2709.8 1449.6 2730.1 1450.9 2748.8 1457.7 C2767.5 1464.5 2780.9 1471.4 2794.3 1482.0 C2807.7 1492.6 2816.6 1507.2 2829.2 1521.4 C2841.8 1535.6 2855.6 1554.4 2870.0 1567.0 C2884.4 1579.6 2900.4 1588.9 2915.6 1597.2 C2930.8 1605.5 2940.8 1610.2 2961.0 1617.0 C2981.2 1623.8 3015.5 1632.0 3037.0 1638.2 C3058.5 1644.4 3066.0 1651.1 3090.0 1654.0 C3114.0 1656.9 3150.7 1657.0 3181.0 1655.5 C3211.3 1654.0 3244.2 1650.2 3272.0 1644.9 C3299.8 1639.6 3325.1 1631.7 3347.8 1623.6 C3370.6 1615.5 3390.8 1606.4 3408.5 1596.3 C3426.2 1586.2 3442.9 1573.6 3454.0 1563.0 C3465.1 1552.4 3470.6 1543.2 3475.2 1532.6 C3479.8 1522.0 3480.3 1504.8 3481.3 1499.3" fill="none" stroke="#f4f4f4" stroke-width="1.2"/>
<path d="M1976.0 1335.0 C1987.3 1334.0 2021.5 1333.3 2044.0 1329.0 C2066.5 1324.7 2090.7 1315.0 2111.0 1309.0 C2131.3 1303.0 2147.9 1296.1 2165.6 1293.0 C2183.3 1289.9 2200.3 1289.3 2217.0 1290.5 C2233.7 1291.7 2243.4 1295.4 2265.7 1300.0 C2288.0 1304.6 2328.2 1313.5 2350.6 1318.0 C2373.0 1322.5 2381.7 1321.5 2400.0 1327.3 C2418.3 1333.1 2442.0 1342.6 2460.7 1353.0 C2479.4 1363.4 2492.0 1375.3 2512.2 1389.5 C2532.4 1403.7 2553.7 1424.1 2582.0 1438.0 C2610.3 1451.9 2654.2 1464.1 2682.0 1472.9 C2709.8 1481.7 2730.1 1483.9 2748.8 1491.0 C2767.5 1498.1 2781.2 1505.3 2794.3 1515.4 C2807.5 1525.5 2816.1 1539.6 2827.7 1551.7 C2839.3 1563.8 2849.3 1576.5 2864.0 1588.1 C2878.7 1599.7 2899.4 1612.4 2915.6 1621.5 C2931.8 1630.6 2940.8 1635.6 2961.0 1642.7 C2981.2 1649.8 3015.5 1657.6 3037.0 1664.0 C3058.5 1670.4 3066.0 1677.9 3090.0 1681.3 C3114.0 1684.7 3150.7 1685.6 3181.0 1684.3 C3211.3 1683.0 3241.7 1679.3 3272.0 1673.7 C3302.3 1668.1 3337.7 1659.2 3363.0 1650.9 C3388.3 1642.6 3406.9 1632.7 3423.6 1623.6 C3440.3 1614.5 3452.9 1606.4 3463.0 1596.3 C3473.1 1586.2 3479.7 1573.6 3484.3 1563.0 C3488.9 1552.4 3490.4 1542.5 3490.4 1532.6 C3490.4 1522.7 3485.8 1509.3 3484.3 1503.8 C3482.8 1498.2 3481.8 1500.0 3481.3 1499.3" fill="none" stroke="#f4f4f4" stroke-width="1.1"/>
<path d="M3090.0 1320.3 C3096.7 1321.8 3113.3 1326.5 3130.0 1329.0 C3146.7 1331.5 3170.0 1332.8 3190.0 1335.0 C3210.0 1337.2 3233.3 1339.5 3250.0 1342.0 C3266.7 1344.5 3273.7 1345.7 3290.0 1350.0 C3306.3 1354.3 3328.1 1358.8 3347.8 1368.0 C3367.6 1377.2 3390.8 1393.0 3408.5 1405.3 C3426.2 1417.6 3442.9 1430.6 3454.0 1441.7 C3465.1 1452.8 3470.6 1462.4 3475.2 1472.0 C3479.8 1481.6 3480.3 1494.8 3481.3 1499.3" fill="none" stroke="#f4f4f4" stroke-width="1.2"/>
<path d="M2111 1279 L2110 1309 q-2 8 -6 14" fill="none" stroke="#f4f4f4" stroke-width="1"/>
<path d="M2265.7 1270 L2264.7 1300 q-2 8 -6 14" fill="none" stroke="#f4f4f4" stroke-width="1"/>
<path d="M2350.6 1288 L2349.6 1318 q-2 8 -6 14" fill="none" stroke="#f4f4f4" stroke-width="1"/>
<path d="M2515.3 1359.1 L2514.3 1390 q-2 8 -6 14" fill="none" stroke="#f4f4f4" stroke-width="1"/>
<path d="M2682 1441 L2681 1473 q-2 8 -6 14" fill="none" stroke="#f4f4f4" stroke-width="1"/>
<path d="M2829.2 1521.4 L2828.2 1552 q-2 8 -6 14" fill="none" stroke="#f4f4f4" stroke-width="1"/>
<path d="M1801.7 1233.5 L1921.5 1286.5 L1920 1326 L1804.7 1274.4 L1799 1257 L1799 1240 Z" fill="#31313d" stroke="#f4f4f4" stroke-width="1.1"/>
<path d="M1921.5 1286.5 Q1923 1283 1945 1283.5 Q1972 1285 1976 1300 L1976 1335 Q1972 1343 1960 1349 L1921 1330 Z" fill="url(#gHole)" stroke="#f4f4f4" stroke-width="1.1"/>
<path d="M1801.7 1233.5 Q1798 1222 1800 1215" fill="none" stroke="#f4f4f4" stroke-width="1.1"/>
<ellipse cx="1977.6" cy="1219" rx="94" ry="46.3" fill="url(#gHole)" stroke="#f4f4f4" stroke-width="1.2"/>
<path d="M1883.6 1219 A94 46.3 0 0 1 1905 1189.5 L1905 1248.5 A94 46.3 0 0 1 1883.6 1219 Z" fill="url(#gHoleL)"/>
<path d="M1905 1189.5 L1904 1243" stroke="#f4f4f4" stroke-width="1.1"/>
<clipPath id="cpH2"><ellipse cx="2400.7" cy="1162.6" rx="176.4" ry="86.1"/></clipPath>
<g clip-path="url(#cpH2)">
<ellipse cx="2400.7" cy="1162.6" rx="176.4" ry="86.1" fill="url(#gHole)"/>
<path d="M2224 1162 A176.4 86.1 0 0 1 2266 1106 L2265 1148 L2232 1172 Z" fill="url(#gHoleL)"/>
<ellipse cx="2400.7" cy="1203.6" rx="176.4" ry="86.1" fill="#747372" stroke="#f4f4f4" stroke-width="1.2"/>
<clipPath id="cpH2b"><ellipse cx="2400" cy="1203.6" rx="129.4" ry="63.1"/></clipPath>
<g clip-path="url(#cpH2b)">
<ellipse cx="2400" cy="1203.6" rx="129.4" ry="63.1" fill="url(#gHole)"/>
<path d="M2270 1203 A129.4 63.1 0 0 1 2301 1162 L2299 1232 Z" fill="url(#gHoleL)"/>
<ellipse cx="2400" cy="1285.6" rx="129.4" ry="63.1" fill="#2c2c38" stroke="#f4f4f4" stroke-width="1.1"/>
<path d="M2290 1222.5 L2290 1290 L2424 1290 L2424 1226 Z" fill="#5a5862"/>
<path d="M2391.7 1222.5 V1248 M2424.5 1226 V1248 M2391.7 1226.5 H2424" stroke="#f4f4f4" stroke-width="1" fill="none"/>
<path d="M2301 1162 L2299 1232" stroke="#f4f4f4" stroke-width="1.1"/>
</g>
<ellipse cx="2400" cy="1203.6" rx="129.4" ry="63.1" fill="none" stroke="#f4f4f4" stroke-width="1.2"/>
<path d="M2266 1104 L2265 1146" stroke="#f4f4f4" stroke-width="1.1"/>
</g>
<ellipse cx="2400.7" cy="1162.6" rx="176.4" ry="86.1" fill="none" stroke="#f4f4f4" stroke-width="1.2"/>
<clipPath id="cpH3"><ellipse cx="2758.5" cy="1320.4" rx="175.5" ry="86.4"/></clipPath>
<g clip-path="url(#cpH3)">
<ellipse cx="2758.5" cy="1320.4" rx="175.5" ry="86.4" fill="url(#gHole)"/>
<path d="M2583 1320 A175.5 86.4 0 0 1 2623 1266 L2621.4 1372.8 L2598 1352 Z" fill="url(#gHoleL)"/>
<ellipse cx="2758.5" cy="1443" rx="175.5" ry="86.4" fill="#2a2a36" stroke="#f4f4f4" stroke-width="1.1"/>
<ellipse cx="2711" cy="1383" rx="20" ry="25" transform="rotate(-20 2711 1383)" fill="#9c9a98" stroke="#f4f4f4" stroke-width="1"/>
<path d="M2623 1264 L2621.4 1372.8" stroke="#f4f4f4" stroke-width="1.1"/>
</g>
<ellipse cx="2758.5" cy="1320.4" rx="175.5" ry="86.4" fill="none" stroke="#f4f4f4" stroke-width="1.2"/>
<clipPath id="cpH4"><ellipse cx="3152" cy="1494" rx="141" ry="69.2"/></clipPath>
<g clip-path="url(#cpH4)">
<ellipse cx="3152" cy="1494" rx="141" ry="69.2" fill="url(#gHole)"/>
<path d="M3011 1494 A141 69.2 0 0 1 3044 1450 L3042 1536 Z" fill="url(#gHoleL)"/>
<ellipse cx="3152" cy="1614" rx="141" ry="69.2" fill="#30303c" stroke="#f4f4f4" stroke-width="1.1"/>
<path d="M3136 1562 l18 -14 l16 13 l-14 5 z" fill="#a8a6a4" stroke="#f4f4f4" stroke-width="0.8"/>
<path d="M3044 1446 L3042 1534" stroke="#f4f4f4" stroke-width="1.1"/>
</g>
<ellipse cx="3152" cy="1494" rx="141" ry="69.2" fill="none" stroke="#f4f4f4" stroke-width="1.2"/>
<ellipse cx="1933.6" cy="1157" rx="18.2" ry="9.2" fill="#747372" stroke="#f4f4f4" stroke-width="1.1"/><ellipse cx="1934.3999999999999" cy="1157.6" rx="15" ry="7.6" fill="url(#gSmall)" stroke="#f4f4f4" stroke-width="1"/>
<ellipse cx="2185.5" cy="1138.3" rx="18.2" ry="9.2" fill="#747372" stroke="#f4f4f4" stroke-width="1.1"/><ellipse cx="2186.3" cy="1138.8999999999999" rx="15" ry="7.6" fill="url(#gSmall)" stroke="#f4f4f4" stroke-width="1"/>
<ellipse cx="2102" cy="1200" rx="18.2" ry="9.2" fill="#747372" stroke="#f4f4f4" stroke-width="1.1"/><ellipse cx="2102.8" cy="1200.6" rx="15" ry="7.6" fill="url(#gSmall)" stroke="#f4f4f4" stroke-width="1"/>
<ellipse cx="1853.2" cy="1238" rx="18.2" ry="9.2" fill="#747372" stroke="#f4f4f4" stroke-width="1.1"/><ellipse cx="1854.0" cy="1238.6" rx="15" ry="7.6" fill="url(#gSmall)" stroke="#f4f4f4" stroke-width="1"/>
<ellipse cx="2258.3" cy="1241" rx="18.2" ry="9.2" fill="#747372" stroke="#f4f4f4" stroke-width="1.1"/><ellipse cx="2259.1000000000004" cy="1241.6" rx="15" ry="7.6" fill="url(#gSmall)" stroke="#f4f4f4" stroke-width="1"/>
<ellipse cx="2021.5" cy="1280.5" rx="18.2" ry="9.2" fill="#747372" stroke="#f4f4f4" stroke-width="1.1"/><ellipse cx="2022.3" cy="1281.1" rx="15" ry="7.6" fill="url(#gSmall)" stroke="#f4f4f4" stroke-width="1"/>
<ellipse cx="2328.3" cy="1060.1" rx="18.2" ry="9.2" fill="#747372" stroke="#f4f4f4" stroke-width="1.1"/><ellipse cx="2329.1000000000004" cy="1060.6999999999998" rx="15" ry="7.6" fill="url(#gSmall)" stroke="#f4f4f4" stroke-width="1"/>
<ellipse cx="2543.4" cy="1084.1" rx="18.2" ry="9.2" fill="#747372" stroke="#f4f4f4" stroke-width="1.1"/><ellipse cx="2544.2000000000003" cy="1084.6999999999998" rx="15" ry="7.6" fill="url(#gSmall)" stroke="#f4f4f4" stroke-width="1"/>
<ellipse cx="2616.2" cy="1187.2" rx="18.2" ry="9.2" fill="#747372" stroke="#f4f4f4" stroke-width="1.1"/><ellipse cx="2617.0" cy="1187.8" rx="15" ry="7.6" fill="url(#gSmall)" stroke="#f4f4f4" stroke-width="1"/>
<ellipse cx="2686" cy="1217.8" rx="18.2" ry="9.2" fill="#747372" stroke="#f4f4f4" stroke-width="1.1"/><ellipse cx="2686.8" cy="1218.3999999999999" rx="15" ry="7.6" fill="url(#gSmall)" stroke="#f4f4f4" stroke-width="1"/>
<ellipse cx="2473.9" cy="1265.4" rx="18.2" ry="9.2" fill="#747372" stroke="#f4f4f4" stroke-width="1.1"/><ellipse cx="2474.7000000000003" cy="1266.0" rx="15" ry="7.6" fill="url(#gSmall)" stroke="#f4f4f4" stroke-width="1"/>
<ellipse cx="2543.4" cy="1295.8" rx="18.2" ry="9.2" fill="#747372" stroke="#f4f4f4" stroke-width="1.1"/><ellipse cx="2544.2000000000003" cy="1296.3999999999999" rx="15" ry="7.6" fill="url(#gSmall)" stroke="#f4f4f4" stroke-width="1"/>
<ellipse cx="2891.6" cy="1241.2" rx="18.2" ry="9.2" fill="#747372" stroke="#f4f4f4" stroke-width="1.1"/><ellipse cx="2892.4" cy="1241.8" rx="15" ry="7.6" fill="url(#gSmall)" stroke="#f4f4f4" stroke-width="1"/>
<ellipse cx="2615.9" cy="1396.5" rx="18.2" ry="9.2" fill="#747372" stroke="#f4f4f4" stroke-width="1.1"/><ellipse cx="2616.7000000000003" cy="1397.1" rx="15" ry="7.6" fill="url(#gSmall)" stroke="#f4f4f4" stroke-width="1"/>
<ellipse cx="2974.2" cy="1344.9" rx="18.2" ry="9.2" fill="#747372" stroke="#f4f4f4" stroke-width="1.1"/><ellipse cx="2975.0" cy="1345.5" rx="15" ry="7.6" fill="url(#gSmall)" stroke="#f4f4f4" stroke-width="1"/>
<ellipse cx="3129.5" cy="1349.6" rx="18.2" ry="9.2" fill="#747372" stroke="#f4f4f4" stroke-width="1.1"/><ellipse cx="3130.3" cy="1350.1999999999998" rx="15" ry="7.6" fill="url(#gSmall)" stroke="#f4f4f4" stroke-width="1"/>
<ellipse cx="2831.6" cy="1422.8" rx="18.2" ry="9.2" fill="#747372" stroke="#f4f4f4" stroke-width="1.1"/><ellipse cx="2832.4" cy="1423.3999999999999" rx="15" ry="7.6" fill="url(#gSmall)" stroke="#f4f4f4" stroke-width="1"/>
<ellipse cx="2858.9" cy="1498.7" rx="18.2" ry="9.2" fill="#747372" stroke="#f4f4f4" stroke-width="1.1"/><ellipse cx="2859.7000000000003" cy="1499.3" rx="15" ry="7.6" fill="url(#gSmall)" stroke="#f4f4f4" stroke-width="1"/>
<ellipse cx="2961.1" cy="1599.4" rx="18.2" ry="9.2" fill="#747372" stroke="#f4f4f4" stroke-width="1.1"/><ellipse cx="2961.9" cy="1600.0" rx="15" ry="7.6" fill="url(#gSmall)" stroke="#f4f4f4" stroke-width="1"/>
<ellipse cx="3343.3" cy="1388.6" rx="18.2" ry="9.2" fill="#747372" stroke="#f4f4f4" stroke-width="1.1"/><ellipse cx="3344.1000000000004" cy="1389.1999999999998" rx="15" ry="7.6" fill="url(#gSmall)" stroke="#f4f4f4" stroke-width="1"/>
<ellipse cx="3445.5" cy="1488.7" rx="18.2" ry="9.2" fill="#747372" stroke="#f4f4f4" stroke-width="1.1"/><ellipse cx="3446.3" cy="1489.3" rx="15" ry="7.6" fill="url(#gSmall)" stroke="#f4f4f4" stroke-width="1"/>
<ellipse cx="3376" cy="1592.4" rx="18.2" ry="9.2" fill="#747372" stroke="#f4f4f4" stroke-width="1.1"/><ellipse cx="3376.8" cy="1593.0" rx="15" ry="7.6" fill="url(#gSmall)" stroke="#f4f4f4" stroke-width="1"/>
<ellipse cx="3175" cy="1637.9" rx="18.2" ry="9.2" fill="#747372" stroke="#f4f4f4" stroke-width="1.1"/><ellipse cx="3175.8" cy="1638.5" rx="15" ry="7.6" fill="url(#gSmall)" stroke="#f4f4f4" stroke-width="1"/>
<path d="M2525.5 893.1 L2526.3 906.8 L2526.6 923.0 L2504.1 926.0 L2496.0 918.0 L2496.0 912.8 L2503.6 906.8 Z" fill="#7b7a78"/><path d="M2504.1 921.0 L2507.6 931.0 L2515.6 932.0 Z" fill="#20202c"/><path d="M2525.5 893.1 L2503.6 906.8 L2496.0 912.8 L2496.0 917.9 L2499.8 926.0 L2509.4 931.6 L2533.1 936.1 L2548.3 932.6 L2557.4 928.5 M2503.6 906.8 L2504.1 924.0 M2525.5 893.1 L2526.3 906.8" fill="none" stroke="#f4f4f4" stroke-width="1.1"/><ellipse cx="2529.6" cy="923.0" rx="23.5" ry="11" fill="#85858f" stroke="#f4f4f4" stroke-width="1"/><path d="M2515.7 918.0 V926.5 A13.9 6.3 0 0 0 2543.5 926.5 V918.0 Z" fill="url(#gBolt)"/><path d="M2515.7 918.0 A13.9 6.3 0 0 0 2543.5 918.0 L2539.2 911.5 A9.5 4.3 0 0 0 2520.2 911.5 Z" fill="url(#gBolt)" stroke="#f4f4f4" stroke-width="0.9"/><path d="M2515.7 918.0 V926.5 L2521.6 930.0 V922.0 Z" fill="#2a2a3a"/><ellipse cx="2529.7" cy="911.4" rx="9.5" ry="4.3" fill="#8c8c9a" stroke="#f4f4f4" stroke-width="0.9"/><path d="M2521.6 922.0 V930.0" stroke="#f4f4f4" stroke-width="0.9"/>
<path d="M2810.4 1020.7 L2811.2 1034.4 L2811.5 1050.6 L2789.0 1053.6 L2780.9 1045.6 L2780.9 1040.4 L2788.5 1034.4 Z" fill="#7b7a78"/><path d="M2789.0 1048.6 L2792.5 1058.6 L2800.5 1059.6 Z" fill="#20202c"/><path d="M2810.4 1020.7 L2788.5 1034.4 L2780.9 1040.4 L2780.9 1045.5 L2784.7 1053.6 L2794.3 1059.2 L2818.0 1063.7 L2833.2 1060.2 L2842.3 1056.1 M2788.5 1034.4 L2789.0 1051.6 M2810.4 1020.7 L2811.2 1034.4" fill="none" stroke="#f4f4f4" stroke-width="1.1"/><ellipse cx="2814.5" cy="1050.6" rx="23.5" ry="11" fill="#85858f" stroke="#f4f4f4" stroke-width="1"/><path d="M2800.6 1045.6 V1054.1 A13.9 6.3 0 0 0 2828.4 1054.1 V1045.6 Z" fill="url(#gBolt)"/><path d="M2800.6 1045.6 A13.9 6.3 0 0 0 2828.4 1045.6 L2824.1 1039.1 A9.5 4.3 0 0 0 2805.1 1039.1 Z" fill="url(#gBolt)" stroke="#f4f4f4" stroke-width="0.9"/><path d="M2800.6 1045.6 V1054.1 L2806.5 1057.6 V1049.6 Z" fill="#2a2a3a"/><ellipse cx="2814.6" cy="1039.0" rx="9.5" ry="4.3" fill="#8c8c9a" stroke="#f4f4f4" stroke-width="0.9"/><path d="M2806.5 1049.6 V1057.6" stroke="#f4f4f4" stroke-width="0.9"/>
<path d="M3096.2 1147.1 L3097.0 1160.8 L3097.3 1177.0 L3074.8 1180.0 L3066.7 1172.0 L3066.7 1166.8 L3074.3 1160.8 Z" fill="#7b7a78"/><path d="M3074.8 1175.0 L3078.3 1185.0 L3086.3 1186.0 Z" fill="#20202c"/><path d="M3096.2 1147.1 L3074.3 1160.8 L3066.7 1166.8 L3066.7 1171.9 L3070.5 1180.0 L3080.1 1185.6 L3103.8 1190.1 L3119.0 1186.6 L3128.1 1182.5 M3074.3 1160.8 L3074.8 1178.0 M3096.2 1147.1 L3097.0 1160.8" fill="none" stroke="#f4f4f4" stroke-width="1.1"/><ellipse cx="3100.3" cy="1177.0" rx="23.5" ry="11" fill="#85858f" stroke="#f4f4f4" stroke-width="1"/><path d="M3086.4 1172.0 V1180.5 A13.9 6.3 0 0 0 3114.2 1180.5 V1172.0 Z" fill="url(#gBolt)"/><path d="M3086.4 1172.0 A13.9 6.3 0 0 0 3114.2 1172.0 L3109.9 1165.5 A9.5 4.3 0 0 0 3090.9 1165.5 Z" fill="url(#gBolt)" stroke="#f4f4f4" stroke-width="0.9"/><path d="M3086.4 1172.0 V1180.5 L3092.3 1184.0 V1176.0 Z" fill="#2a2a3a"/><ellipse cx="3100.4" cy="1165.4" rx="9.5" ry="4.3" fill="#8c8c9a" stroke="#f4f4f4" stroke-width="0.9"/><path d="M3092.3 1176.0 V1184.0" stroke="#f4f4f4" stroke-width="0.9"/>
<path d="M3383.9 1273.6 L3384.7 1287.3 L3385.0 1303.5 L3362.5 1306.5 L3354.4 1298.5 L3354.4 1293.3 L3362.0 1287.3 Z" fill="#7b7a78"/><path d="M3362.5 1301.5 L3366.0 1311.5 L3374.0 1312.5 Z" fill="#20202c"/><path d="M3383.9 1273.6 L3362.0 1287.3 L3354.4 1293.3 L3354.4 1298.4 L3358.2 1306.5 L3367.8 1312.1 L3391.5 1316.6 L3406.7 1313.1 L3415.8 1309.0 M3362.0 1287.3 L3362.5 1304.5 M3383.9 1273.6 L3384.7 1287.3" fill="none" stroke="#f4f4f4" stroke-width="1.1"/><ellipse cx="3388.0" cy="1303.5" rx="23.5" ry="11" fill="#85858f" stroke="#f4f4f4" stroke-width="1"/><path d="M3374.1 1298.5 V1307.0 A13.9 6.3 0 0 0 3401.9 1307.0 V1298.5 Z" fill="url(#gBolt)"/><path d="M3374.1 1298.5 A13.9 6.3 0 0 0 3401.9 1298.5 L3397.6 1292.0 A9.5 4.3 0 0 0 3378.6 1292.0 Z" fill="url(#gBolt)" stroke="#f4f4f4" stroke-width="0.9"/><path d="M3374.1 1298.5 V1307.0 L3380.0 1310.5 V1302.5 Z" fill="#2a2a3a"/><ellipse cx="3388.1" cy="1291.9" rx="9.5" ry="4.3" fill="#8c8c9a" stroke="#f4f4f4" stroke-width="0.9"/><path d="M3380.0 1302.5 V1310.5" stroke="#f4f4f4" stroke-width="0.9"/>
<path d="M3670.9 1399.6 L3671.7 1413.3 L3672.0 1429.5 L3649.5 1432.5 L3641.4 1424.5 L3641.4 1419.3 L3649.0 1413.3 Z" fill="#7b7a78"/><path d="M3649.5 1427.5 L3653.0 1437.5 L3661.0 1438.5 Z" fill="#20202c"/><path d="M3670.9 1399.6 L3649.0 1413.3 L3641.4 1419.3 L3641.4 1424.4 L3645.2 1432.5 L3654.8 1438.1 L3678.5 1442.6 L3693.7 1439.1 L3702.8 1435.0 M3649.0 1413.3 L3649.5 1430.5 M3670.9 1399.6 L3671.7 1413.3" fill="none" stroke="#f4f4f4" stroke-width="1.1"/><ellipse cx="3675.0" cy="1429.5" rx="23.5" ry="11" fill="#85858f" stroke="#f4f4f4" stroke-width="1"/><path d="M3661.1 1424.5 V1433.0 A13.9 6.3 0 0 0 3688.9 1433.0 V1424.5 Z" fill="url(#gBolt)"/><path d="M3661.1 1424.5 A13.9 6.3 0 0 0 3688.9 1424.5 L3684.6 1418.0 A9.5 4.3 0 0 0 3665.6 1418.0 Z" fill="url(#gBolt)" stroke="#f4f4f4" stroke-width="0.9"/><path d="M3661.1 1424.5 V1433.0 L3667.0 1436.5 V1428.5 Z" fill="#2a2a3a"/><ellipse cx="3675.1" cy="1417.9" rx="9.5" ry="4.3" fill="#8c8c9a" stroke="#f4f4f4" stroke-width="0.9"/><path d="M3667.0 1428.5 V1436.5" stroke="#f4f4f4" stroke-width="0.9"/>
<path d="M2310.2 901.0 Q2338.2 906.0 2349.2 925.0 L2340.2 933.0 L2322.2 916.0 L2310.2 916.0 Z" fill="#262632" stroke="#f4f4f4" stroke-width="1.1"/><path d="M2332.2 909.0 L2332.2 924.0 L2338.2 928.0 L2339.2 913.0 Z" fill="#8a8a96"/><path d="M2310.2 897.0 V924.0 M2287.2 934.0 Q2304.2 946.0 2340.2 936.0" stroke="#f4f4f4" stroke-width="1.1" fill="none"/><ellipse cx="2314.2" cy="930.0" rx="23.5" ry="11" fill="#85858f" stroke="#f4f4f4" stroke-width="1"/><path d="M2300.3 925.0 V933.5 A13.9 6.3 0 0 0 2328.1 933.5 V925.0 Z" fill="url(#gBolt)"/><path d="M2300.3 925.0 A13.9 6.3 0 0 0 2328.1 925.0 L2323.8 918.5 A9.5 4.3 0 0 0 2304.8 918.5 Z" fill="url(#gBolt)" stroke="#f4f4f4" stroke-width="0.9"/><path d="M2300.3 925.0 V933.5 L2306.2 937.0 V929.0 Z" fill="#2a2a3a"/><ellipse cx="2314.3" cy="918.4" rx="9.5" ry="4.3" fill="#8c8c9a" stroke="#f4f4f4" stroke-width="0.9"/><path d="M2306.2 929.0 V937.0" stroke="#f4f4f4" stroke-width="0.9"/>
<path d="M2066.5 1036.0 Q2094.5 1041.0 2105.5 1060.0 L2096.5 1068.0 L2078.5 1051.0 L2066.5 1051.0 Z" fill="#262632" stroke="#f4f4f4" stroke-width="1.1"/><path d="M2088.5 1044.0 L2088.5 1059.0 L2094.5 1063.0 L2095.5 1048.0 Z" fill="#8a8a96"/><path d="M2066.5 1032.0 V1059.0 M2043.5 1069.0 Q2060.5 1081.0 2096.5 1071.0" stroke="#f4f4f4" stroke-width="1.1" fill="none"/><ellipse cx="2070.5" cy="1065.0" rx="23.5" ry="11" fill="#85858f" stroke="#f4f4f4" stroke-width="1"/><path d="M2056.6 1060.0 V1068.5 A13.9 6.3 0 0 0 2084.4 1068.5 V1060.0 Z" fill="url(#gBolt)"/><path d="M2056.6 1060.0 A13.9 6.3 0 0 0 2084.4 1060.0 L2080.1 1053.5 A9.5 4.3 0 0 0 2061.1 1053.5 Z" fill="url(#gBolt)" stroke="#f4f4f4" stroke-width="0.9"/><path d="M2056.6 1060.0 V1068.5 L2062.5 1072.0 V1064.0 Z" fill="#2a2a3a"/><ellipse cx="2070.6" cy="1053.4" rx="9.5" ry="4.3" fill="#8c8c9a" stroke="#f4f4f4" stroke-width="0.9"/><path d="M2062.5 1064.0 V1072.0" stroke="#f4f4f4" stroke-width="0.9"/>
<path d="M1912.5 1329.1 Q1922.6 1322.6 1937.1 1323.1 Q1963.6 1324.1 1974.9 1340.5 Q1973.6 1349.1 1966.3 1352.0 L1943.1 1365.1 L1912.5 1356.6 Z" fill="#6e6d75" stroke="#f4f4f4" stroke-width="1.1"/><path d="M1951.6 1325.6 Q1968.6 1329.1 1974.2 1340.3 Q1972.6 1348.1 1966.3 1351.1 L1962.6 1344.1 Q1962.6 1333.1 1951.6 1325.6 Z" fill="#272733"/><polygon points="1889.6,1341.1 1912.5,1329.1 1912.5,1356.6 1889.6,1368.6" fill="#757473" stroke="#f4f4f4" stroke-width="1.1"/><polygon points="1889.6,1368.6 1912.5,1356.6 1943.1,1365.1 1942.9,1392.1" fill="#7a7977" stroke="#f4f4f4" stroke-width="1.1"/><polygon points="1913.1,1346.3 1921.6,1357.7 1920.6,1375.5 1913.6,1362.3" fill="#23232f" stroke="#f4f4f4" stroke-width="0.9"/><polygon points="1921.6,1357.7 1943.4,1364.6 1942.9,1379.5 1931.6,1378.1 1920.6,1375.5" fill="#5e5e78" stroke="#f4f4f4" stroke-width="0.9"/><path d="M1943.1 1365.1 L1942.9 1392.1" stroke="#f4f4f4" stroke-width="1.1"/><ellipse cx="1938.9" cy="1346.9" rx="23.5" ry="11" fill="#85858f" stroke="#f4f4f4" stroke-width="1"/><path d="M1925.0 1341.9 V1350.4 A13.9 6.3 0 0 0 1952.8 1350.4 V1341.9 Z" fill="url(#gBolt)"/><path d="M1925.0 1341.9 A13.9 6.3 0 0 0 1952.8 1341.9 L1948.5 1335.4 A9.5 4.3 0 0 0 1929.5 1335.4 Z" fill="url(#gBolt)" stroke="#f4f4f4" stroke-width="0.9"/><path d="M1925.0 1341.9 V1350.4 L1930.9 1353.9 V1345.9 Z" fill="#2a2a3a"/><ellipse cx="1939.0" cy="1335.3" rx="9.5" ry="4.3" fill="#8c8c9a" stroke="#f4f4f4" stroke-width="0.9"/><path d="M1930.9 1345.9 V1353.9" stroke="#f4f4f4" stroke-width="0.9"/>
<path d="M2100.1 1413.4 Q2110.2 1406.9 2124.7 1407.4 Q2151.2 1408.4 2162.5 1424.8 Q2161.2 1433.4 2153.9 1436.3 L2130.7 1449.4 L2100.1 1440.9 Z" fill="#6e6d75" stroke="#f4f4f4" stroke-width="1.1"/><path d="M2139.2 1409.9 Q2156.2 1413.4 2161.8 1424.6 Q2160.2 1432.4 2153.9 1435.4 L2150.2 1428.4 Q2150.2 1417.4 2139.2 1409.9 Z" fill="#272733"/><polygon points="2077.2,1425.4 2100.1,1413.4 2100.1,1440.9 2077.2,1452.9" fill="#757473" stroke="#f4f4f4" stroke-width="1.1"/><polygon points="2077.2,1452.9 2100.1,1440.9 2130.7,1449.4 2130.5,1476.4" fill="#7a7977" stroke="#f4f4f4" stroke-width="1.1"/><polygon points="2100.7,1430.6 2109.2,1442.0 2108.2,1459.8 2101.2,1446.6" fill="#23232f" stroke="#f4f4f4" stroke-width="0.9"/><polygon points="2109.2,1442.0 2131.0,1448.9 2130.5,1463.8 2119.2,1462.4 2108.2,1459.8" fill="#5e5e78" stroke="#f4f4f4" stroke-width="0.9"/><path d="M2130.7 1449.4 L2130.5 1476.4" stroke="#f4f4f4" stroke-width="1.1"/><ellipse cx="2126.5" cy="1431.2" rx="23.5" ry="11" fill="#85858f" stroke="#f4f4f4" stroke-width="1"/><path d="M2112.6 1426.2 V1434.7 A13.9 6.3 0 0 0 2140.4 1434.7 V1426.2 Z" fill="url(#gBolt)"/><path d="M2112.6 1426.2 A13.9 6.3 0 0 0 2140.4 1426.2 L2136.1 1419.7 A9.5 4.3 0 0 0 2117.1 1419.7 Z" fill="url(#gBolt)" stroke="#f4f4f4" stroke-width="0.9"/><path d="M2112.6 1426.2 V1434.7 L2118.5 1438.2 V1430.2 Z" fill="#2a2a3a"/><ellipse cx="2126.6" cy="1419.6" rx="9.5" ry="4.3" fill="#8c8c9a" stroke="#f4f4f4" stroke-width="0.9"/><path d="M2118.5 1430.2 V1438.2" stroke="#f4f4f4" stroke-width="0.9"/>
<path d="M2386.9 1544.5 Q2397.0 1538.0 2411.5 1538.5 Q2438.0 1539.5 2449.3 1555.9 Q2448.0 1564.5 2440.7 1567.4 L2417.5 1580.5 L2386.9 1572.0 Z" fill="#6e6d75" stroke="#f4f4f4" stroke-width="1.1"/><path d="M2426.0 1541.0 Q2443.0 1544.5 2448.6 1555.7 Q2447.0 1563.5 2440.7 1566.5 L2437.0 1559.5 Q2437.0 1548.5 2426.0 1541.0 Z" fill="#272733"/><polygon points="2364.0,1556.5 2386.9,1544.5 2386.9,1572.0 2364.0,1584.0" fill="#757473" stroke="#f4f4f4" stroke-width="1.1"/><polygon points="2364.0,1584.0 2386.9,1572.0 2417.5,1580.5 2417.3,1607.5" fill="#7a7977" stroke="#f4f4f4" stroke-width="1.1"/><polygon points="2387.5,1561.7 2396.0,1573.1 2395.0,1590.9 2388.0,1577.7" fill="#23232f" stroke="#f4f4f4" stroke-width="0.9"/><polygon points="2396.0,1573.1 2417.8,1580.0 2417.3,1594.9 2406.0,1593.5 2395.0,1590.9" fill="#5e5e78" stroke="#f4f4f4" stroke-width="0.9"/><path d="M2417.5 1580.5 L2417.3 1607.5" stroke="#f4f4f4" stroke-width="1.1"/><ellipse cx="2413.3" cy="1562.3" rx="23.5" ry="11" fill="#85858f" stroke="#f4f4f4" stroke-width="1"/><path d="M2399.4 1557.3 V1565.8 A13.9 6.3 0 0 0 2427.2 1565.8 V1557.3 Z" fill="url(#gBolt)"/><path d="M2399.4 1557.3 A13.9 6.3 0 0 0 2427.2 1557.3 L2422.9 1550.8 A9.5 4.3 0 0 0 2403.9 1550.8 Z" fill="url(#gBolt)" stroke="#f4f4f4" stroke-width="0.9"/><path d="M2399.4 1557.3 V1565.8 L2405.3 1569.3 V1561.3 Z" fill="#2a2a3a"/><ellipse cx="2413.4" cy="1550.7" rx="9.5" ry="4.3" fill="#8c8c9a" stroke="#f4f4f4" stroke-width="0.9"/><path d="M2405.3 1561.3 V1569.3" stroke="#f4f4f4" stroke-width="0.9"/>
<path d="M2674.6 1665.6 Q2684.7 1659.1 2699.2 1659.6 Q2725.7 1660.6 2737.0 1677.0 Q2735.7 1685.6 2728.4 1688.5 L2705.2 1701.6 L2674.6 1693.1 Z" fill="#6e6d75" stroke="#f4f4f4" stroke-width="1.1"/><path d="M2713.7 1662.1 Q2730.7 1665.6 2736.3 1676.8 Q2734.7 1684.6 2728.4 1687.6 L2724.7 1680.6 Q2724.7 1669.6 2713.7 1662.1 Z" fill="#272733"/><polygon points="2651.7,1677.6 2674.6,1665.6 2674.6,1693.1 2651.7,1705.1" fill="#757473" stroke="#f4f4f4" stroke-width="1.1"/><polygon points="2651.7,1705.1 2674.6,1693.1 2705.2,1701.6 2705.0,1728.6" fill="#7a7977" stroke="#f4f4f4" stroke-width="1.1"/><polygon points="2675.2,1682.8 2683.7,1694.2 2682.7,1712.0 2675.7,1698.8" fill="#23232f" stroke="#f4f4f4" stroke-width="0.9"/><polygon points="2683.7,1694.2 2705.5,1701.1 2705.0,1716.0 2693.7,1714.6 2682.7,1712.0" fill="#5e5e78" stroke="#f4f4f4" stroke-width="0.9"/><path d="M2705.2 1701.6 L2705.0 1728.6" stroke="#f4f4f4" stroke-width="1.1"/><ellipse cx="2701.0" cy="1683.4" rx="23.5" ry="11" fill="#85858f" stroke="#f4f4f4" stroke-width="1"/><path d="M2687.1 1678.4 V1686.9 A13.9 6.3 0 0 0 2714.9 1686.9 V1678.4 Z" fill="url(#gBolt)"/><path d="M2687.1 1678.4 A13.9 6.3 0 0 0 2714.9 1678.4 L2710.6 1671.9 A9.5 4.3 0 0 0 2691.6 1671.9 Z" fill="url(#gBolt)" stroke="#f4f4f4" stroke-width="0.9"/><path d="M2687.1 1678.4 V1686.9 L2693.0 1690.4 V1682.4 Z" fill="#2a2a3a"/><ellipse cx="2701.1" cy="1671.8" rx="9.5" ry="4.3" fill="#8c8c9a" stroke="#f4f4f4" stroke-width="0.9"/><path d="M2693.0 1682.4 V1690.4" stroke="#f4f4f4" stroke-width="0.9"/>
<path d="M3714.8 1520.5 Q3703.0 1512.1 3689.0 1512.6 Q3665.0 1513.6 3655.7 1529.6 Q3657.0 1537.6 3669.0 1543.6 L3694.0 1553.6 L3714.8 1546.3 Z" fill="#737272" stroke="#f4f4f4" stroke-width="1.1"/><path d="M3679.0 1514.6 Q3662.0 1518.6 3656.4 1529.6 Q3658.0 1536.6 3669.0 1542.6 L3666.0 1533.6 Q3667.0 1521.6 3679.0 1514.6 Z" fill="#8a8988"/><polygon points="3739.0,1529.6 3714.8,1520.5 3714.8,1546.3 3739.0,1557.0" fill="#30303c" stroke="#f4f4f4" stroke-width="1.1"/><polygon points="3739.0,1557.0 3714.8,1546.3 3694.0,1553.6 3693.6,1581.2" fill="#6e6d70" stroke="#f4f4f4" stroke-width="1.1"/><polygon points="3692.0,1541.6 3713.0,1547.6 3712.0,1565.6 3701.0,1571.6 3691.5,1569.6" fill="#8888a0" stroke="#f4f4f4" stroke-width="0.9"/><path d="M3667.0 1539.6 Q3684.0 1541.6 3692.0 1551.6 L3691.5 1569.6" fill="none" stroke="#f4f4f4" stroke-width="1"/><ellipse cx="3689.0" cy="1533.1" rx="23.5" ry="11" fill="#85858f" stroke="#f4f4f4" stroke-width="1"/><path d="M3675.1 1528.1 V1536.6 A13.9 6.3 0 0 0 3702.9 1536.6 V1528.1 Z" fill="url(#gBolt)"/><path d="M3675.1 1528.1 A13.9 6.3 0 0 0 3702.9 1528.1 L3698.6 1521.6 A9.5 4.3 0 0 0 3679.6 1521.6 Z" fill="url(#gBolt)" stroke="#f4f4f4" stroke-width="0.9"/><path d="M3675.1 1528.1 V1536.6 L3681.0 1540.1 V1532.1 Z" fill="#2a2a3a"/><ellipse cx="3689.1" cy="1521.5" rx="9.5" ry="4.3" fill="#8c8c9a" stroke="#f4f4f4" stroke-width="0.9"/><path d="M3681.0 1532.1 V1540.1" stroke="#f4f4f4" stroke-width="0.9"/>
<path d="M3472.2 1654.0 Q3460.4 1645.6 3446.4 1646.1 Q3422.4 1647.1 3413.1 1663.1 Q3414.4 1671.1 3426.4 1677.1 L3451.4 1687.1 L3472.2 1679.8 Z" fill="#737272" stroke="#f4f4f4" stroke-width="1.1"/><path d="M3436.4 1648.1 Q3419.4 1652.1 3413.8 1663.1 Q3415.4 1670.1 3426.4 1676.1 L3423.4 1667.1 Q3424.4 1655.1 3436.4 1648.1 Z" fill="#8a8988"/><polygon points="3496.4,1663.1 3472.2,1654.0 3472.2,1679.8 3496.4,1690.5" fill="#30303c" stroke="#f4f4f4" stroke-width="1.1"/><polygon points="3496.4,1690.5 3472.2,1679.8 3451.4,1687.1 3451.0,1714.7" fill="#6e6d70" stroke="#f4f4f4" stroke-width="1.1"/><polygon points="3449.4,1675.1 3470.4,1681.1 3469.4,1699.1 3458.4,1705.1 3448.9,1703.1" fill="#8888a0" stroke="#f4f4f4" stroke-width="0.9"/><path d="M3424.4 1673.1 Q3441.4 1675.1 3449.4 1685.1 L3448.9 1703.1" fill="none" stroke="#f4f4f4" stroke-width="1"/><ellipse cx="3446.4" cy="1666.6" rx="23.5" ry="11" fill="#85858f" stroke="#f4f4f4" stroke-width="1"/><path d="M3432.5 1661.6 V1670.1 A13.9 6.3 0 0 0 3460.3 1670.1 V1661.6 Z" fill="url(#gBolt)"/><path d="M3432.5 1661.6 A13.9 6.3 0 0 0 3460.3 1661.6 L3456.0 1655.1 A9.5 4.3 0 0 0 3437.0 1655.1 Z" fill="url(#gBolt)" stroke="#f4f4f4" stroke-width="0.9"/><path d="M3432.5 1661.6 V1670.1 L3438.4 1673.6 V1665.6 Z" fill="#2a2a3a"/><ellipse cx="3446.5" cy="1655.0" rx="9.5" ry="4.3" fill="#8c8c9a" stroke="#f4f4f4" stroke-width="0.9"/><path d="M3438.4 1665.6 V1673.6" stroke="#f4f4f4" stroke-width="0.9"/>
</g>
<g id="annot"><g transform="matrix(0.83 0.366 0 1 1831.0 581.4)"><path d="M0 0 H346.4 V-56 H0 Z M97 0 V-56 M285 0 V-56" fill="none" stroke="#38167a" stroke-width="1.3" vector-effect="non-scaling-stroke"/><circle cx="48.5" cy="-28.0" r="20" fill="none" stroke="#38167a" stroke-width="4.4" stroke-linecap="round"/><circle cx="48.5" cy="-28.0" r="13.5" fill="none" stroke="#38167a" stroke-width="4.4" stroke-linecap="round"/><text x="108" y="-10" font-size="50" fill="#38167a" stroke="#38167a" stroke-width="1.4" font-family="Liberation Sans, sans-serif">Ø0.045</text><text x="315.7" y="-10" text-anchor="middle" font-size="50" fill="#38167a" stroke="#38167a" stroke-width="1.4" font-family="Liberation Sans, sans-serif">C</text></g>
<g transform="matrix(0.83 0.366 0 1 1772.7 545.2)"><path d="M5 -30 H39 Q44 -30 44 -25 V-12 L57 -5 L44 -7 V-5 Q44 0 39 0 H5 Q0 0 0 -5 V-25 Q0 -30 5 -30 Z" fill="none" stroke="#38167a" stroke-width="1.2" vector-effect="non-scaling-stroke"/><text x="22.0" y="-4.5" text-anchor="middle" font-size="28" fill="#38167a" stroke="#38167a" stroke-width="0.7" font-family="Liberation Sans, sans-serif">10</text></g>
<g transform="matrix(0.83 0.366 0 1 1890.3 515.2)"><path d="M5 -30 H23 Q28 -30 28 -25 V-12 L41 -5 L28 -7 V-5 Q28 0 23 0 H5 Q0 0 0 -5 V-25 Q0 -30 5 -30 Z" fill="none" stroke="#5aa21f" stroke-width="1.2" vector-effect="non-scaling-stroke"/><text x="14.0" y="-4.5" text-anchor="middle" font-size="28" fill="#5aa21f" stroke="#5aa21f" stroke-width="0.7" font-family="Liberation Sans, sans-serif">9</text></g>
<text transform="matrix(0.83 0.366 0 1 1935.0 535.0)" x="0" y="0" font-size="50" fill="#5aa21f" stroke="#5aa21f" stroke-width="1.5" font-family="Liberation Sans, sans-serif">Ø75</text>
<text transform="matrix(0.83 0.366 0 1 2013.0 543.4)" x="0" y="0" font-size="50" fill="#5aa21f" stroke="#5aa21f" stroke-width="1.5" font-family="Liberation Sans, sans-serif">+0.03</text>
<text transform="matrix(0.83 0.366 0 1 2036.0 608.8)" x="0" y="0" font-size="50" fill="#5aa21f" stroke="#5aa21f" stroke-width="1.5" font-family="Liberation Sans, sans-serif">0</text>
<path d="M2122.4 599.2 L2545.3 785.6" fill="none" stroke="#5aa21f" stroke-width="1.25"/>
<path d="M2280.0 668.5 L2263.2 664.6 L2265.7 658.7 Z" fill="#5aa21f"/>
<path d="M2546.5 786.0 L2529.7 782.1 L2532.2 776.2 Z" fill="#5aa21f"/>
<path d="M2279.8 652.0 L2266.0 1144.0" fill="none" stroke="#5aa21f" stroke-width="1.3"/>
<path d="M2548.0 770.0 L2536.0 1220.0" fill="none" stroke="#5aa21f" stroke-width="1.3"/>
<g transform="matrix(0.83 0.366 0 1 1751.4 658.8)"><path d="M5 -30 H39 Q44 -30 44 -25 V-12 L57 -5 L44 -7 V-5 Q44 0 39 0 H5 Q0 0 0 -5 V-25 Q0 -30 5 -30 Z" fill="none" stroke="#38167a" stroke-width="1.2" vector-effect="non-scaling-stroke"/><text x="22.0" y="-4.5" text-anchor="middle" font-size="28" fill="#38167a" stroke="#38167a" stroke-width="0.7" font-family="Liberation Sans, sans-serif">22</text></g>
<text transform="matrix(0.83 0.366 0 1 1811.4 685.7)" x="0" y="0" font-size="50" fill="#38167a" stroke="#38167a" stroke-width="1.5" font-family="Liberation Sans, sans-serif">Ø55</text>
<text transform="matrix(0.83 0.366 0 1 1891.0 694.8)" x="0" y="0" font-size="50" fill="#38167a" stroke="#38167a" stroke-width="1.5" font-family="Liberation Sans, sans-serif">+0.03</text>
<text transform="matrix(0.83 0.366 0 1 1910.8 758.5)" x="0" y="0" font-size="50" fill="#38167a" stroke="#38167a" stroke-width="1.5" font-family="Liberation Sans, sans-serif">0</text>
<path d="M1998.4 748.8 L2505.0 972.2" fill="none" stroke="#38167a" stroke-width="1.25"/>
<path d="M2309.5 886.0 L2326.3 889.9 L2323.8 895.8 Z" fill="#38167a"/>
<path d="M2505.5 972.4 L2488.7 968.5 L2491.2 962.6 Z" fill="#38167a"/>
<path d="M2310.0 866.0 L2300.0 1240.0" fill="none" stroke="#38167a" stroke-width="1.1"/>
<path d="M2506.5 950.0 L2498.0 1236.0" fill="none" stroke="#38167a" stroke-width="1.1"/>
<g transform="matrix(0.83 0.366 0 1 1609.0 686.4)"><path d="M0 0 H464.9 V-56 H0 Z M98.3 0 V-56 M286.7 0 V-56 M345.0 0 V-56 M403.5 0 V-56" fill="none" stroke="#38167a" stroke-width="1.3" vector-effect="non-scaling-stroke"/><circle cx="49.15" cy="-28.0" r="11" fill="none" stroke="#38167a" stroke-width="4.4" stroke-linecap="round"/><path d="M27.15 -28.0 H71.15 M49.15 -50.0 V-6.0" fill="none" stroke="#38167a" stroke-width="4.4" stroke-linecap="round"/><text x="109.3" y="-10" font-size="50" fill="#38167a" stroke="#38167a" stroke-width="1.4" font-family="Liberation Sans, sans-serif">Ø0.045</text><text x="315.84999999999997" y="-10" text-anchor="middle" font-size="50" fill="#38167a" stroke="#38167a" stroke-width="1.4" font-family="Liberation Sans, sans-serif">A</text><text x="374.25" y="-10" text-anchor="middle" font-size="50" fill="#38167a" stroke="#38167a" stroke-width="1.4" font-family="Liberation Sans, sans-serif">B</text><text x="434.2" y="-10" text-anchor="middle" font-size="50" fill="#38167a" stroke="#38167a" stroke-width="1.4" font-family="Liberation Sans, sans-serif">C</text></g>
<g transform="matrix(0.83 0.366 0 1 1551.0 651.8)"><path d="M5 -30 H39 Q44 -30 44 -25 V-12 L57 -5 L44 -7 V-5 Q44 0 39 0 H5 Q0 0 0 -5 V-25 Q0 -30 5 -30 Z" fill="none" stroke="#38167a" stroke-width="1.2" vector-effect="non-scaling-stroke"/><text x="22.0" y="-4.5" text-anchor="middle" font-size="28" fill="#38167a" stroke="#38167a" stroke-width="0.7" font-family="Liberation Sans, sans-serif">23</text></g>
<g transform="matrix(0.83 0.366 0 1 1316.8 828.8)"><path d="M0 0 H429.1 V-56 H0 Z M96.4 0 V-56 M249.9 0 V-56 M308.4 0 V-56 M366.9 0 V-56" fill="none" stroke="#38167a" stroke-width="1.3" vector-effect="non-scaling-stroke"/><path d="M21.200000000000003 -15.0 A27 27 0 0 1 75.2 -15.0 Z" fill="none" stroke="#38167a" stroke-width="4.4" stroke-linecap="round" stroke-linejoin="round"/><text x="107.4" y="-10" font-size="50" fill="#38167a" stroke="#38167a" stroke-width="1.4" font-family="Liberation Sans, sans-serif">0.035</text><text x="279.15" y="-10" text-anchor="middle" font-size="50" fill="#38167a" stroke="#38167a" stroke-width="1.4" font-family="Liberation Sans, sans-serif">A</text><text x="337.65" y="-10" text-anchor="middle" font-size="50" fill="#38167a" stroke="#38167a" stroke-width="1.4" font-family="Liberation Sans, sans-serif">B</text><text x="398.0" y="-10" text-anchor="middle" font-size="50" fill="#38167a" stroke="#38167a" stroke-width="1.4" font-family="Liberation Sans, sans-serif">C</text></g>
<g transform="matrix(0.83 0.366 0 1 1259.2 793.8)"><path d="M5 -30 H39 Q44 -30 44 -25 V-12 L57 -5 L44 -7 V-5 Q44 0 39 0 H5 Q0 0 0 -5 V-25 Q0 -30 5 -30 Z" fill="none" stroke="#38167a" stroke-width="1.2" vector-effect="non-scaling-stroke"/><text x="22.0" y="-4.5" text-anchor="middle" font-size="28" fill="#38167a" stroke="#38167a" stroke-width="0.7" font-family="Liberation Sans, sans-serif">21</text></g>
<path d="M1674.6 958.4 L1715.2 976.0 L1824.4 1213.7" fill="none" stroke="#38167a" stroke-width="1.25"/>
<path d="M1824.4 1213.7 L1817.0 1203.9 L1821.8 1201.7 Z" fill="#38167a"/>
<text transform="matrix(0.83 0.366 0 1 3338.0 859.7)" x="0" y="0" font-size="50" fill="#38167a" stroke="#38167a" stroke-width="1.5" font-family="Liberation Sans, sans-serif">Ø60</text>
<text transform="matrix(0.83 0.366 0 1 3416.0 868.1)" x="0" y="0" font-size="50" fill="#38167a" stroke="#38167a" stroke-width="1.5" font-family="Liberation Sans, sans-serif">+0.03</text>
<text transform="matrix(0.83 0.366 0 1 3438.3 932.9)" x="0" y="0" font-size="50" fill="#38167a" stroke="#38167a" stroke-width="1.5" font-family="Liberation Sans, sans-serif">0</text>
<g transform="matrix(0.83 0.366 0 1 3333.4 948.6)"><path d="M0 0 H345.3 V-56 H0 Z M98.3 0 V-56 M286.3 0 V-56" fill="none" stroke="#38167a" stroke-width="1.3" vector-effect="non-scaling-stroke"/><circle cx="49.15" cy="-28.0" r="20" fill="none" stroke="#38167a" stroke-width="4.4" stroke-linecap="round"/><circle cx="49.15" cy="-28.0" r="13.5" fill="none" stroke="#38167a" stroke-width="4.4" stroke-linecap="round"/><text x="109.3" y="-10" font-size="50" fill="#38167a" stroke="#38167a" stroke-width="1.4" font-family="Liberation Sans, sans-serif">Ø0.045</text><text x="315.8" y="-10" text-anchor="middle" font-size="50" fill="#38167a" stroke="#38167a" stroke-width="1.4" font-family="Liberation Sans, sans-serif">A</text></g>
<g transform="matrix(0.83 0.366 0 1 3544.0 950.0)"><path d="M5 -30 H39 Q44 -30 44 -25 V-5 Q44 0 39 0 H5 Q0 0 0 -5 V-16 L-13 -24 L0 -21 V-25 Q0 -30 5 -30 Z" fill="none" stroke="#38167a" stroke-width="1.2" vector-effect="non-scaling-stroke"/><text x="22.0" y="-4.5" text-anchor="middle" font-size="28" fill="#38167a" stroke="#38167a" stroke-width="0.7" font-family="Liberation Sans, sans-serif">13</text></g>
<g transform="matrix(0.83 0.366 0 1 3639.6 1073.9)"><path d="M5 -30 H39 Q44 -30 44 -25 V-5 Q44 0 39 0 H5 Q0 0 0 -5 V-16 L-13 -24 L0 -21 V-25 Q0 -30 5 -30 Z" fill="none" stroke="#38167a" stroke-width="1.2" vector-effect="non-scaling-stroke"/><text x="22.0" y="-4.5" text-anchor="middle" font-size="28" fill="#38167a" stroke="#38167a" stroke-width="0.7" font-family="Liberation Sans, sans-serif">14</text></g>
<path d="M3066.0 722.5 L3336.0 837.5" fill="none" stroke="#38167a" stroke-width="1.25"/>
<path d="M3066.5 722.7 L3083.4 726.4 L3080.9 732.3 Z" fill="#38167a"/>
<path d="M3279.5 813.3 L3262.6 809.6 L3265.1 803.7 Z" fill="#38167a"/>
<path d="M3066.5 706.0 L3044.0 1446.0" fill="none" stroke="#38167a" stroke-width="1.1"/>
<path d="M3280.5 797.0 L3260.0 1538.0" fill="none" stroke="#38167a" stroke-width="1.1"/>
<g transform="matrix(0.83 0.366 -0.71 0.385 2109.8 546.2)"><path d="M5 -30 H39 Q44 -30 44 -25 V-12 L57 -5 L44 -7 V-5 Q44 0 39 0 H5 Q0 0 0 -5 V-25 Q0 -30 5 -30 Z" fill="none" stroke="#38167a" stroke-width="1.2" vector-effect="non-scaling-stroke"/><text x="22.0" y="-4.5" text-anchor="middle" font-size="28" fill="#38167a" stroke="#38167a" stroke-width="0.7" font-family="Liberation Sans, sans-serif">11</text></g>
<text transform="matrix(0.83 0.366 -0.71 0.385 2168.0 569.5)" x="0" y="0" font-size="52" fill="#38167a" stroke="#38167a" stroke-width="1.5" font-family="Liberation Sans, sans-serif">46X Ø7±0.075 BOTH SIDES</text>
<g transform="matrix(0.83 0.366 -0.71 0.385 2300.2 679.2)"><path d="M0 0 H433.4 V-56 H0 Z M103 0 V-56 M261.5 0 V-56 M318.8 0 V-56 M376.1 0 V-56" fill="none" stroke="#38167a" stroke-width="1.3" vector-effect="non-scaling-stroke"/><circle cx="51.5" cy="-28.0" r="11" fill="none" stroke="#38167a" stroke-width="4.4" stroke-linecap="round"/><path d="M29.5 -28.0 H73.5 M51.5 -50.0 V-6.0" fill="none" stroke="#38167a" stroke-width="4.4" stroke-linecap="round"/><text x="114" y="-10" font-size="50" fill="#38167a" stroke="#38167a" stroke-width="1.4" font-family="Liberation Sans, sans-serif">Ø0.15</text><text x="290.15" y="-10" text-anchor="middle" font-size="50" fill="#38167a" stroke="#38167a" stroke-width="1.4" font-family="Liberation Sans, sans-serif">A</text><text x="347.45" y="-10" text-anchor="middle" font-size="50" fill="#38167a" stroke="#38167a" stroke-width="1.4" font-family="Liberation Sans, sans-serif">B</text><text x="404.75" y="-10" text-anchor="middle" font-size="50" fill="#38167a" stroke="#38167a" stroke-width="1.4" font-family="Liberation Sans, sans-serif">C</text></g>
<g transform="matrix(0.83 0.366 -0.71 0.385 2251.2 649.8)"><path d="M5 -30 H39 Q44 -30 44 -25 V-12 L57 -5 L44 -7 V-5 Q44 0 39 0 H5 Q0 0 0 -5 V-25 Q0 -30 5 -30 Z" fill="none" stroke="#38167a" stroke-width="1.2" vector-effect="non-scaling-stroke"/><text x="22.0" y="-4.5" text-anchor="middle" font-size="28" fill="#38167a" stroke="#38167a" stroke-width="0.7" font-family="Liberation Sans, sans-serif">12</text></g>
<path d="M2723.0 806.0 L2779.0 830.5 L2545.0 1085.0" fill="none" stroke="#38167a" stroke-width="1.25"/>
<g transform="matrix(0.83 0.366 -0.71 0.385 1055.2 1186.2)"><path d="M5 -30 H39 Q44 -30 44 -25 V-12 L57 -5 L44 -7 V-5 Q44 0 39 0 H5 Q0 0 0 -5 V-25 Q0 -30 5 -30 Z" fill="none" stroke="#38167a" stroke-width="1.2" vector-effect="non-scaling-stroke"/><text x="22.0" y="-4.5" text-anchor="middle" font-size="28" fill="#38167a" stroke="#38167a" stroke-width="0.7" font-family="Liberation Sans, sans-serif">20</text></g>
<g transform="matrix(0.83 0.366 -0.71 0.385 1107.0 1215.0)"><path d="M0 0 H462.3 V-56 H0 Z M96 0 V-56 M285 0 V-56 M344 0 V-56 M403 0 V-56" fill="none" stroke="#38167a" stroke-width="1.3" vector-effect="non-scaling-stroke"/><circle cx="48.0" cy="-28.0" r="11" fill="none" stroke="#38167a" stroke-width="4.4" stroke-linecap="round"/><path d="M26.0 -28.0 H70.0 M48.0 -50.0 V-6.0" fill="none" stroke="#38167a" stroke-width="4.4" stroke-linecap="round"/><text x="107" y="-10" font-size="50" fill="#38167a" stroke="#38167a" stroke-width="1.4" font-family="Liberation Sans, sans-serif">Ø0.026</text><text x="314.5" y="-10" text-anchor="middle" font-size="50" fill="#38167a" stroke="#38167a" stroke-width="1.4" font-family="Liberation Sans, sans-serif">A</text><text x="373.5" y="-10" text-anchor="middle" font-size="50" fill="#38167a" stroke="#38167a" stroke-width="1.4" font-family="Liberation Sans, sans-serif">B</text><text x="432.65" y="-10" text-anchor="middle" font-size="50" fill="#38167a" stroke="#38167a" stroke-width="1.4" font-family="Liberation Sans, sans-serif">C</text></g>
<g transform="matrix(0.83 0.366 -0.71 0.385 1273.0 1240.8)"><path d="M5 -30 H39 Q44 -30 44 -25 V-12 L57 -5 L44 -7 V-5 Q44 0 39 0 H5 Q0 0 0 -5 V-25 Q0 -30 5 -30 Z" fill="none" stroke="#38167a" stroke-width="1.2" vector-effect="non-scaling-stroke"/><text x="22.0" y="-4.5" text-anchor="middle" font-size="28" fill="#38167a" stroke="#38167a" stroke-width="0.7" font-family="Liberation Sans, sans-serif">19</text></g>
<g transform="matrix(0.83 0.366 -0.71 0.385 1325.4 1272.2)"><path d="M0 0 H248.20000000000002 V-56 H0 Z M96.4 0 V-56" fill="none" stroke="#38167a" stroke-width="1.3" vector-effect="non-scaling-stroke"/><circle cx="48.2" cy="-28.0" r="12.5" fill="none" stroke="#38167a" stroke-width="4.4" stroke-linecap="round"/><path d="M22.200000000000003 -10.0 L42.2 -48.0 M54.2 -10.0 L74.2 -48.0" fill="none" stroke="#38167a" stroke-width="4.4" stroke-linecap="round"/><text x="107.4" y="-10" font-size="50" fill="#38167a" stroke="#38167a" stroke-width="1.4" font-family="Liberation Sans, sans-serif">0.005</text></g>
<g transform="matrix(0.83 0.366 -0.71 0.385 1264.7 1177.8)"><path d="M5 -30 H39 Q44 -30 44 -25 V-12 L57 -5 L44 -7 V-5 Q44 0 39 0 H5 Q0 0 0 -5 V-25 Q0 -30 5 -30 Z" fill="none" stroke="#38167a" stroke-width="1.2" vector-effect="non-scaling-stroke"/><text x="22.0" y="-4.5" text-anchor="middle" font-size="28" fill="#38167a" stroke="#38167a" stroke-width="0.7" font-family="Liberation Sans, sans-serif">18</text></g>
<text transform="matrix(0.83 0.366 -0.71 0.385 1324.0 1203.0)" x="0" y="0" font-size="52" fill="#38167a" stroke="#38167a" stroke-width="1.5" font-family="Liberation Sans, sans-serif">2X Ø40</text>
<text transform="matrix(0.83 0.366 -0.71 0.385 1495.2 1260.3)" x="0" y="0" font-size="52" fill="#38167a" stroke="#38167a" stroke-width="1.5" font-family="Liberation Sans, sans-serif">+0.025</text>
<text transform="matrix(0.83 0.366 -0.71 0.385 1481.0 1292.5)" x="0" y="0" font-size="52" fill="#38167a" stroke="#38167a" stroke-width="1.5" font-family="Liberation Sans, sans-serif">0</text>
<path d="M1613.9 1316.4 L1667.1 1341.1 L1900.0 1239.0" fill="none" stroke="#38167a" stroke-width="1.25"/>
<text transform="matrix(0.83 0.366 -0.71 0.385 3566.0 1085.0)" x="0" y="0" font-size="52" fill="#38167a" stroke="#38167a" stroke-width="1.5" font-family="Liberation Sans, sans-serif">2X Ø75</text>
<text transform="matrix(0.83 0.366 -0.71 0.385 3732.0 1136.5)" x="0" y="0" font-size="52" fill="#38167a" stroke="#38167a" stroke-width="1.5" font-family="Liberation Sans, sans-serif">+0.03</text>
<text transform="matrix(0.83 0.366 -0.71 0.385 3712.0 1168.5)" x="0" y="0" font-size="52" fill="#38167a" stroke="#38167a" stroke-width="1.5" font-family="Liberation Sans, sans-serif">0</text>
<path d="M2907.0 1277.0 L3523.5 1055.0 L3575.4 1078.4" fill="none" stroke="#38167a" stroke-width="1.25"/>
<g transform="matrix(0.83 0.366 -0.71 0.385 3499.5 1122.7)"><path d="M0 0 H250.7 V-56 H0 Z M93.7 0 V-56" fill="none" stroke="#38167a" stroke-width="1.3" vector-effect="non-scaling-stroke"/><circle cx="46.85" cy="-28.0" r="12.5" fill="none" stroke="#38167a" stroke-width="4.4" stroke-linecap="round"/><path d="M20.85 -10.0 L40.85 -48.0 M52.85 -10.0 L72.85 -48.0" fill="none" stroke="#38167a" stroke-width="4.4" stroke-linecap="round"/><text x="104.7" y="-10" font-size="50" fill="#38167a" stroke="#38167a" stroke-width="1.4" font-family="Liberation Sans, sans-serif">0.006</text></g>
<g transform="matrix(0.83 0.366 -0.71 0.385 3458.0 1143.6)"><path d="M0 0 H461.4 V-56 H0 Z M99.6 0 V-56 M288.0 0 V-56 M345.8 0 V-56 M403.6 0 V-56" fill="none" stroke="#38167a" stroke-width="1.3" vector-effect="non-scaling-stroke"/><circle cx="49.8" cy="-28.0" r="11" fill="none" stroke="#38167a" stroke-width="4.4" stroke-linecap="round"/><path d="M27.799999999999997 -28.0 H71.8 M49.8 -50.0 V-6.0" fill="none" stroke="#38167a" stroke-width="4.4" stroke-linecap="round"/><text x="110.6" y="-10" font-size="50" fill="#38167a" stroke="#38167a" stroke-width="1.4" font-family="Liberation Sans, sans-serif">Ø0.026</text><text x="316.9" y="-10" text-anchor="middle" font-size="50" fill="#38167a" stroke="#38167a" stroke-width="1.4" font-family="Liberation Sans, sans-serif">A</text><text x="374.7" y="-10" text-anchor="middle" font-size="50" fill="#38167a" stroke="#38167a" stroke-width="1.4" font-family="Liberation Sans, sans-serif">B</text><text x="432.5" y="-10" text-anchor="middle" font-size="50" fill="#38167a" stroke="#38167a" stroke-width="1.4" font-family="Liberation Sans, sans-serif">C</text></g>
<g transform="matrix(0.83 0.366 -0.71 0.385 3736.7 1215.5)"><path d="M5 -30 H39 Q44 -30 44 -25 V-5 Q44 0 39 0 H5 Q0 0 0 -5 V-16 L-13 -24 L0 -21 V-25 Q0 -30 5 -30 Z" fill="none" stroke="#38167a" stroke-width="1.2" vector-effect="non-scaling-stroke"/><text x="22.0" y="-4.5" text-anchor="middle" font-size="28" fill="#38167a" stroke="#38167a" stroke-width="0.7" font-family="Liberation Sans, sans-serif">16</text></g></g>
<g id="overlay"><rect x="858.8" y="311.8" width="77" height="77" fill="#f4f5f7" stroke="#000" stroke-width="1.9"/>
<path d="M933.5 314 V387" stroke="#8a8a8a" stroke-width="2"/>
<rect x="868.2" y="321.6" width="50" height="50.5" rx="6.5" fill="none" stroke="#2b2b2d" stroke-width="4.2"/>
<path d="M875.6 329.2 L877.9 326.9 L906.5 355.5 L906.5 348 Q908.2 346.3 910 348 L910 363.8 L894.3 363.8 Q892.6 362 894.3 360.3 L901.8 360.3 L875.6 332.5 Q874.5 330.8 875.6 329.2 Z" fill="#f4f5f7" stroke="#2b2b2d" stroke-width="1.4" stroke-linejoin="round"/>
<polygon points="3692.5,362.2 3774.6,398.2 3771.5,488.0 3701.8,528.3 3620.4,490.4 3623.5,400.5" fill="#8b8b8b" stroke="#3f6fb5" stroke-width="1.6" stroke-linejoin="round"/>
<path d="M3623.5 400.5 L3704.1 435.4 L3774.6 398.2 M3704.1 435.4 L3701.8 528.3" fill="none" stroke="#3f6fb5" stroke-width="1.6"/>
<text transform="matrix(0.465 -0.258 1.07 0.474 3678.9 419.6)" font-size="30" font-family="Liberation Sans, sans-serif" fill="#0a0a0a">BOTTOM</text>
<text transform="matrix(-0.458 -0.196 0 -1.05 3688.6 464.5)" font-size="37" font-family="Liberation Sans, sans-serif" fill="#0a0a0a">RIGHT</text>
<text transform="matrix(-0.396 0.195 0 -1.05 3763 437.7)" font-size="37" font-family="Liberation Sans, sans-serif" fill="#0a0a0a">FRONT</text>
<defs><linearGradient id="tY" x1="0" y1="0" x2="0.3" y2="1"><stop offset="0" stop-color="#96be4a"/><stop offset="1" stop-color="#5a7c26"/></linearGradient><linearGradient id="tX" x1="0" y1="0" x2="-0.3" y2="1"><stop offset="0" stop-color="#a45a5a"/><stop offset="1" stop-color="#6e3838"/></linearGradient><linearGradient id="tZ" x1="0" y1="0" x2="1" y2="0"><stop offset="0" stop-color="#34408c"/><stop offset="0.5" stop-color="#4658b8"/><stop offset="1" stop-color="#34408c"/></linearGradient></defs>
<path d="M984 1590 L984 1650 L977 1652 Q978 1660 989.8 1666 Q1003 1660 1004.5 1652 L997.5 1650 L997.5 1590 Z" fill="url(#tZ)"/>
<path d="M977.5 1654 Q989 1662 1004 1654 L989.8 1666 Z" fill="#16182a"/>
<path d="M993 1579 L993 1593.5 L950 1615 Q944 1626 936 1619 Q928 1608 935 1602 Q941 1597 947 1603 Z" fill="url(#tY)"/>
<circle cx="944" cy="1612" r="11" fill="#7ea63a"/><circle cx="947" cy="1608" r="3.2" fill="#b4dc6a"/>
<path d="M993 1579 L993 1593.5 L1040 1617 L1043 1623 L1062 1616 L1054 1598 L1046 1602 Z" fill="url(#tX)"/>
<circle cx="1049" cy="1607" r="3" fill="#c88484"/>
<text x="914" y="1633" font-size="25" fill="#8aae2a" font-family="DejaVu Sans Light, DejaVu Sans, sans-serif" font-weight="200">Y</text>
<text x="1070" y="1630" font-size="25" fill="#b04444" font-family="DejaVu Sans Light, DejaVu Sans, sans-serif" font-weight="200">X</text>
<text x="983" y="1690" font-size="25" fill="#4a5ad0" font-family="DejaVu Sans Light, DejaVu Sans, sans-serif" font-weight="200">Z</text>
<rect x="1732" y="1583.6" width="1226.7" height="105.6" rx="9" fill="#fff" fill-opacity="0.6" stroke="#1c1c22" stroke-width="2.2"/>
<path d="M1852 1584 V1689 M2102 1584 V1689 M2469.7 1584 V1689 M2718.8 1584 V1689" stroke="#141418" stroke-width="2.6"/>
<path d="M1745 1631 V1628 L1784 1600 L1823 1628 V1631 M1756 1630 V1670.5 M1811.8 1630 V1670.5 M1753 1670.5 H1815 M1772.1 1670 V1640 H1793.2 V1670" fill="none" stroke="#4a4a4c" stroke-width="5.5" stroke-linejoin="round" stroke-linecap="round" stroke-linecap="butt"/>
<path d="M1932 1600 L1881 1636 L1932 1670.5" fill="none" stroke="#4a4a4c" stroke-width="5.5" stroke-linejoin="round" stroke-linecap="round"/>
<path d="M1905 1618 Q1921 1636 1907 1655" fill="none" stroke="#4a4a4c" stroke-width="3"/>
<ellipse cx="1920.5" cy="1636.5" rx="5.5" ry="11" fill="#4a4a4c"/>
<path d="M1929 1636.5 H1953" stroke="#4a4a4c" stroke-width="2.6" stroke-dasharray="5 3.2"/>
<path d="M2000.5 1623.5 L2015 1600 H2064.5 L2047.5 1623.5 Z" fill="none"/>
<rect x="2000.5" y="1623.5" width="47" height="46" rx="4" fill="#8f8f93"/>
<path d="M2047.5 1623.5 L2064.5 1600.5 V1647 L2047.5 1669 Z" fill="#7d7d81"/>
<path d="M2004.5 1623.5 H2047.5 V1665.5 Q2047.5 1669.5 2043.5 1669.5 H2004.5 Q2000.5 1669.5 2000.5 1665.5 V1627.5 Q2000.5 1623.5 2004.5 1623.5 L2016 1603 Q2018 1600 2022 1600 H2060 Q2064.5 1600 2064.5 1604 V1644 L2047.5 1667 M2047.5 1623.5 L2064 1602" fill="none" stroke="#4a4a4c" stroke-width="5.5" stroke-linejoin="round" stroke-linecap="round"/>
<text x="2122.5" y="1638.5" font-size="62" font-family="Liberation Sans, sans-serif" fill="#4a4a4c" stroke="#4a4a4c" stroke-width="1.6">a</text>
<path d="M2166.5 1638 L2200 1657.5 L2187.5 1662.5 L2196 1675 L2188 1679.5 L2180 1667 L2171.5 1677 Z" fill="none" stroke="#4a4a4c" stroke-width="4.6" stroke-linejoin="round"/>
<path d="M2157.5 1593 L2166.5 1585.5 L2175.5 1593 M2158 1594 H2175" fill="none" stroke="#55555a" stroke-width="1.8"/>
<rect x="2242.5" y="1596.3" width="86.5" height="86.3" fill="#000" fill-opacity="0.035" stroke="#66666c" stroke-width="2"/>
<path d="M2262.5 1613 L2309.5 1642 L2290 1650 L2301 1666.5 L2291 1672.5 L2280.5 1656 L2269.5 1669.5 Z" fill="none" stroke="#4a4a4c" stroke-width="5.2" stroke-linejoin="round"/>
<path d="M2275.5 1592 L2284.8 1584.5 L2294 1592" fill="none" stroke="#55555a" stroke-width="1.8"/>
<ellipse cx="2401.7" cy="1636" rx="35.5" ry="17" fill="none" stroke="#4a4a4c" stroke-width="5"/>
<path d="M2384 1652 Q2376 1630 2384 1612 Q2392 1598 2402 1599 Q2414 1601 2419 1616" fill="none" stroke="#4a4a4c" stroke-width="5" stroke-linecap="round"/>
<path d="M2384 1628 Q2386 1610 2402 1608 Q2416 1610 2419 1626 Q2404 1634 2384 1628 Z" fill="#4a4a4c"/>
<path d="M2386 1654 Q2392 1672 2404 1672 Q2416 1668 2421 1648 L2422 1634" fill="none" stroke="#4a4a4c" stroke-width="5" stroke-linecap="round"/>
<path d="M2413 1642 L2422 1632 L2430 1643 M2398 1652 L2410 1658 L2400 1667 M2388 1658 H2409" fill="none" stroke="#4a4a4c" stroke-width="4" stroke-linecap="round" stroke-linejoin="round"/>
<path d="M2504 1617 L2531.5 1603 L2560.5 1617 L2534 1629.5 Z" fill="#c4c4c6"  stroke="#4a4a4c" stroke-width="5.5" stroke-linejoin="round" stroke-linecap="round"/>
<path d="M2510 1626 V1636 L2534 1648 L2556 1636 V1626 L2534 1633 Z" fill="#8c8c90"/>
<path d="M2501.5 1634.5 L2521.5 1643 V1668 L2501.5 1657 Z" fill="#b0b0b4"  stroke="#4a4a4c" stroke-width="5.5" stroke-linejoin="round" stroke-linecap="round"/>
<path d="M2561.5 1634.5 L2541.5 1643 V1668 L2561.5 1657 Z" fill="#b0b0b4"  stroke="#4a4a4c" stroke-width="5.5" stroke-linejoin="round" stroke-linecap="round"/>
<rect x="2625" y="1613" width="50" height="50" fill="#9db6c8"/>
<path d="M2642 1611 H2676 Q2679.5 1611 2679.5 1614.5 V1637" fill="none" stroke="#4a4a4c" stroke-width="5.5" stroke-linejoin="round" stroke-linecap="round"/>
<path d="M2623.5 1632 H2660 V1658 H2623.5 Z M2623.5 1632 L2637 1621 H2673 L2660 1632 M2673 1621 V1646 L2660 1658" fill="#cfcfcf" fill-opacity="0.85"  stroke="#4a4a4c" stroke-width="5.5" stroke-linejoin="round" stroke-linecap="round"/>
<path d="M2754 1614 H2768 L2772 1608 H2794 L2798 1614 H2810.5 Q2815 1614 2815 1618.5 V1656 Q2815 1660.5 2810.5 1660.5 H2754 Q2749.5 1660.5 2749.5 1656 V1618.5 Q2749.5 1614 2754 1614 Z" fill="none" stroke="#4a4a4c" stroke-width="5.5" stroke-linejoin="round" stroke-linecap="round"/>
<circle cx="2782.3" cy="1636.7" r="15.2" fill="none" stroke="#4a4a4c" stroke-width="5.5" stroke-linejoin="round" stroke-linecap="round"/>
<path d="M2750 1631.5 H2768 M2797 1631.5 H2815" stroke="#4a4a4c" stroke-width="3.4"/>
<path d="M2926.1 1631.0 L2935.4 1632.2 L2935.4 1641.2 L2926.1 1642.4 L2922.7 1650.6 L2928.4 1658.0 L2922.0 1664.4 L2914.6 1658.7 L2906.4 1662.1 L2905.2 1671.4 L2896.2 1671.4 L2895.0 1662.1 L2886.8 1658.7 L2879.4 1664.4 L2873.0 1658.0 L2878.7 1650.6 L2875.3 1642.4 L2866.0 1641.2 L2866.0 1632.2 L2875.3 1631.0 L2878.7 1622.8 L2873.0 1615.4 L2879.4 1609.0 L2886.8 1614.7 L2895.0 1611.3 L2896.2 1602.0 L2905.2 1602.0 L2906.4 1611.3 L2914.6 1614.7 L2922.0 1609.0 L2928.4 1615.4 L2922.7 1622.8 Z" fill="none" stroke="#4a4a4c" stroke-width="5.5" stroke-linejoin="round"/><circle cx="2900.7" cy="1636.7" r="12.5" fill="none" stroke="#4a4a4c" stroke-width="5.5"/></g>
</svg>
<div id="hdiv"></div>
<div id="tbl">
<div id="thead"></div>
<div class="trow" style="top:1847.5px;height:78.4px"></div>
<div class="trow hl" style="top:1928px;height:94.5px"></div>
<div class="trow" style="top:2024.5px;height:95px"></div>
<div class="tline" style="top:1925.9px"></div>
<div class="tline" style="top:2022.5px"></div>
<div class="tline" style="top:2119.5px"></div>
<span class="t" style="left:80.0px;top:1783.8px;font-size:32.5px;letter-spacing:1.80px;color:#fff;-webkit-text-stroke:0.35px #fff;">Tag</span>
<span class="t" style="left:378.0px;top:1784.2px;font-size:32px;letter-spacing:0.40px;color:#fff;-webkit-text-stroke:0.35px #fff;">Saved View</span>
<span class="t" style="left:695.0px;top:1784.2px;font-size:32px;letter-spacing:0.77px;color:#fff;-webkit-text-stroke:0.35px #fff;">Feature Name</span>
<span class="t" style="left:1053.8px;top:1784.2px;font-size:32px;letter-spacing:1.14px;color:#fff;-webkit-text-stroke:0.35px #fff;">Annotation Name</span>
<span class="t" style="left:1462.6px;top:1785.9px;font-size:30.0px;letter-spacing:-0.71px;color:#fff;-webkit-text-stroke:0.35px #fff;">GD&amp;T</span>
<span class="t" style="left:2006.8px;top:1782.5px;font-size:34.0px;letter-spacing:3.62px;color:#fff;-webkit-text-stroke:0.35px #fff;">(-)</span>
<span class="t" style="left:2306.0px;top:1785.1px;font-size:31px;color:#fff;-webkit-text-stroke:0.35px #fff;">/</span>
<span class="t" style="left:2603.6px;top:1782.9px;font-size:33.5px;letter-spacing:2.06px;color:#fff;-webkit-text-stroke:0.35px #fff;">(+)</span>
<span class="t" style="left:2900.8px;top:1786.8px;font-size:29.0px;letter-spacing:-1.30px;color:#fff;-webkit-text-stroke:0.35px #fff;">DRF</span>
<span class="t" style="left:3198.8px;top:1784.2px;font-size:32px;letter-spacing:-0.33px;color:#fff;-webkit-text-stroke:0.35px #fff;">Sample 1</span>
<span class="t" style="left:3496.8px;top:1784.2px;font-size:32px;letter-spacing:0.66px;color:#fff;-webkit-text-stroke:0.35px #fff;">Sample 2</span>
<div id="tclip">
<span class="t" style="left:80.0px;top:1862.8px;font-size:31px;color:#0c0c0c;">5</span>
<span class="t" style="left:378.0px;top:1863.2px;font-size:30.5px;letter-spacing:-0.80px;color:#0c0c0c;">01_DATUMS</span>
<span class="t" style="left:695.0px;top:1863.6px;font-size:30px;letter-spacing:0.48px;color:#0c0c0c;">Cylinder 17304 [10218]</span>
<span class="t" style="left:1053.8px;top:1861.9px;font-size:32px;letter-spacing:1.70px;color:#0c0c0c;">gp2</span>
<span class="t" style="left:2006.8px;top:1862.8px;font-size:31px;color:#0c0c0c;">-</span>
<span class="t" style="left:2305.0px;top:1862.8px;font-size:31px;color:#0c0c0c;">-</span>
<span class="t" style="left:2603.6px;top:1863.6px;font-size:30px;letter-spacing:1.18px;color:#0c0c0c;">0.006</span>
<span class="t" style="left:2900.8px;top:1862.8px;font-size:31px;color:#0c0c0c;">-</span>
<span class="t" style="left:3198.8px;top:1863.6px;font-size:30px;letter-spacing:1.61px;color:#0c0c0c;">0.0040</span>
<span class="t" style="left:3496.8px;top:1863.6px;font-size:30px;letter-spacing:1.15px;color:#0c0c0c;">0.0070</span>
<span class="t" style="left:80.0px;top:1960.3px;font-size:31px;color:#0c0c0c;">9</span>
<span class="t" style="left:378.0px;top:1959.4px;font-size:32px;letter-spacing:1.41px;color:#0c0c0c;">* multiple</span>
<span class="t" style="left:695.0px;top:1959.4px;font-size:32px;letter-spacing:-0.26px;color:#0c0c0c;">Cylinder 17375 [4310]</span>
<span class="t" style="left:1053.8px;top:1961.1px;font-size:30px;letter-spacing:2.05px;color:#0c0c0c;">ad27</span>
<span class="t" style="left:2006.8px;top:1960.3px;font-size:31px;color:#0c0c0c;">0</span>
<span class="t" style="left:2305.0px;top:1960.3px;font-size:31px;letter-spacing:-0.08px;color:#0c0c0c;">75</span>
<span class="t" style="left:2603.6px;top:1961.1px;font-size:30px;letter-spacing:0.50px;color:#0c0c0c;">0.03</span>
<span class="t" style="left:2900.8px;top:1960.3px;font-size:31px;color:#0c0c0c;">-</span>
<span class="t" style="left:3198.8px;top:1961.1px;font-size:30px;letter-spacing:-0.16px;color:#0c0c0c;">75.0100</span>
<span class="t" style="left:3496.8px;top:1961.1px;font-size:30px;letter-spacing:1.38px;color:#0c0c0c;">74.0000</span>
<span class="t" style="left:80.0px;top:2059.5px;font-size:29.0px;letter-spacing:-1.30px;color:#0c0c0c;">10</span>
<span class="t" style="left:378.0px;top:2056.9px;font-size:32px;letter-spacing:1.41px;color:#0c0c0c;">* multiple</span>
<span class="t" style="left:695.0px;top:2056.9px;font-size:32px;letter-spacing:-0.26px;color:#0c0c0c;">Cylinder 17375 [4310]</span>
<span class="t" style="left:1053.8px;top:2058.6px;font-size:30px;letter-spacing:0.29px;color:#0c0c0c;">gp19</span>
<span class="t" style="left:2006.8px;top:2057.8px;font-size:31px;color:#0c0c0c;">-</span>
<span class="t" style="left:2305.0px;top:2057.8px;font-size:31px;color:#0c0c0c;">-</span>
<span class="t" style="left:2603.6px;top:2058.6px;font-size:30px;letter-spacing:1.18px;color:#0c0c0c;">0.045</span>
<span class="t" style="left:2900.8px;top:2057.8px;font-size:31px;color:#0c0c0c;">C</span>
<span class="t" style="left:3198.8px;top:2058.6px;font-size:30px;letter-spacing:1.47px;color:#0c0c0c;">0.0360</span>
<span class="t" style="left:3496.8px;top:2058.6px;font-size:30px;letter-spacing:1.63px;color:#0c0c0c;">0.0460</span>
<span class="t" style="left:80.0px;top:2156.5px;font-size:29.0px;letter-spacing:-1.30px;color:#0c0c0c;">11.1</span>
<span class="t" style="left:378.0px;top:2153.9px;font-size:32px;letter-spacing:1.41px;color:#0c0c0c;">* multiple</span>
<span class="t" style="left:695.0px;top:2153.9px;font-size:32px;letter-spacing:-0.36px;color:#0c0c0c;">Cylinder 17372 [4310]</span>
<span class="t" style="left:1053.8px;top:2156.5px;font-size:29.0px;letter-spacing:-1.30px;color:#0c0c0c;">ad11</span>
<span class="t" style="left:2006.8px;top:2155.6px;font-size:30px;letter-spacing:1.89px;color:#0c0c0c;">-0.075</span>
<span class="t" style="left:2305.0px;top:2154.8px;font-size:31px;color:#0c0c0c;">7</span>
<span class="t" style="left:2603.6px;top:2155.6px;font-size:30px;letter-spacing:0.43px;color:#0c0c0c;">0.075</span>
<span class="t" style="left:2900.8px;top:2154.8px;font-size:31px;color:#0c0c0c;">-</span>
<span class="t" style="left:3198.8px;top:2155.6px;font-size:30px;letter-spacing:1.63px;color:#0c0c0c;">6.9550</span>
<span class="t" style="left:3496.8px;top:2155.6px;font-size:30px;letter-spacing:-0.23px;color:#0c0c0c;">6.9150</span>
</div>
<svg class="abs" style="left:1450px;top:1848px" width="450" height="333" viewBox="1450 1848 450 333">
<g fill="none" stroke="#000" stroke-width="2.1">
<rect x="1467.3" y="1855.6" width="180.3" height="46.2"/><path d="M1553.7 1855.6 V1901.8"/>
<circle cx="1515.3" cy="1878.5" r="10.8"/><path d="M1492.2 1895 L1512.2 1862.2 M1518.2 1895 L1538.6 1861"/>
<rect x="1467.3" y="2049.3" width="253.7" height="46.1"/><path d="M1553.7 2049.3 V2095.4 M1671.5 2049.3 V2095.4"/>
<circle cx="1515.3" cy="2072.5" r="17.2"/><circle cx="1515.3" cy="2072.5" r="11.3"/>
</g>
<g font-family="Liberation Sans, sans-serif" font-size="33.5" fill="#000">
<text x="1563.3" y="1890.3" textLength="70.4" lengthAdjust="spacingAndGlyphs">0.006</text>
<text x="1463" y="1987" textLength="60" lengthAdjust="spacingAndGlyphs">Ø75</text>
<text x="1548.5" y="1987" textLength="69.5" lengthAdjust="spacingAndGlyphs">+0.03</text>
<text x="1643" y="1987" textLength="15.5" lengthAdjust="spacingAndGlyphs">0</text>
<text x="1563" y="2084" textLength="99.5" lengthAdjust="spacingAndGlyphs">Ø0.045</text>
<text x="1682.6" y="2084" textLength="24" lengthAdjust="spacingAndGlyphs">C</text>
<text x="1463" y="2180.5" textLength="42.5" lengthAdjust="spacingAndGlyphs">Ø7</text>
<text x="1532" y="2180.5" textLength="86.2" lengthAdjust="spacingAndGlyphs">±0.075</text>
<text x="1643" y="2180.5" textLength="94.5" lengthAdjust="spacingAndGlyphs">BOTH</text>
<text x="1761.4" y="2180.5" textLength="99.4" lengthAdjust="spacingAndGlyphs">SIDES</text>
</g></svg>
<svg class="abs" style="left:3765px;top:1753px" width="24" height="428" viewBox="3765 1753 24 428">
<rect x="3765" y="1753" width="24" height="428" fill="#fafafa"/>
<path d="M3770.5 1771.5 L3777 1763 L3783.5 1771.5 Z" fill="#8c8c8c" stroke="#8c8c8c" stroke-width="2" stroke-linejoin="round"/>
<rect x="3770" y="1790.6" width="14" height="29.4" rx="7" fill="#8c8c8c"/>
<path d="M3770.5 2163.5 L3777 2172 L3783.5 2163.5 Z" fill="#8c8c8c" stroke="#8c8c8c" stroke-width="2" stroke-linejoin="round"/>
</svg>
</div>
</body></html>
